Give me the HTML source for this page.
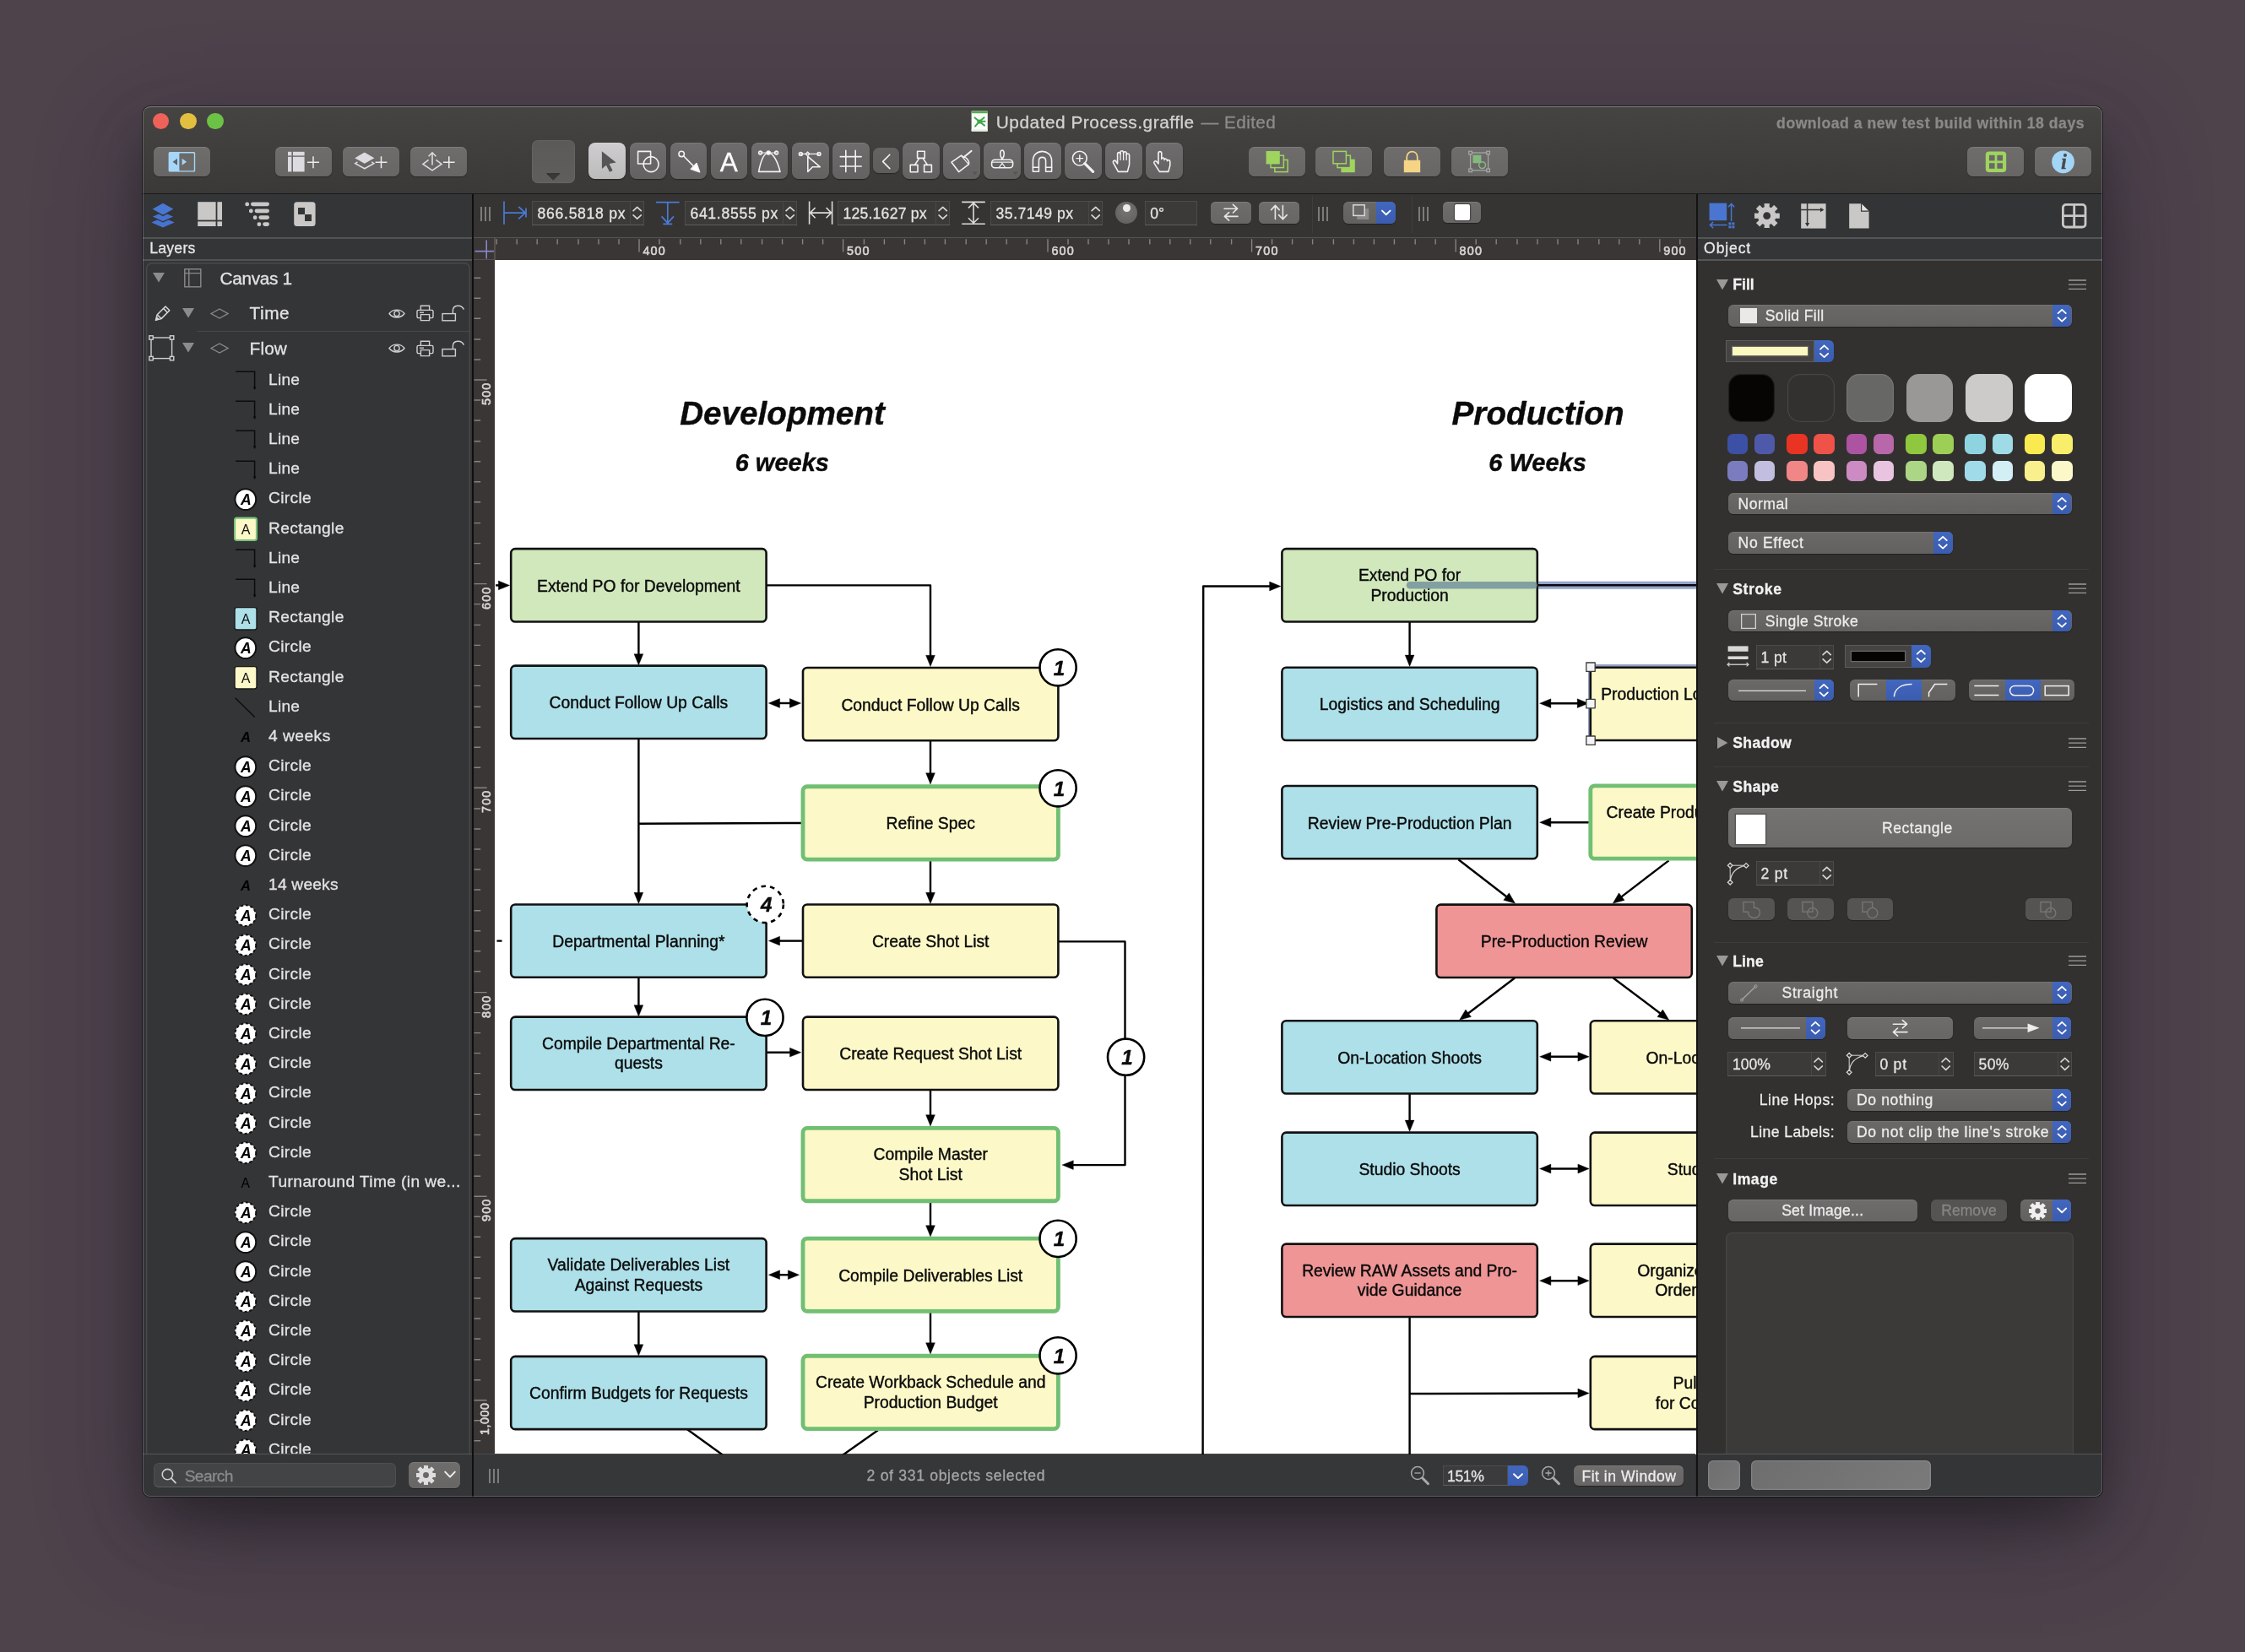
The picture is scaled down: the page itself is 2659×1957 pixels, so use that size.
<!DOCTYPE html>
<html lang="en"><head><meta charset="utf-8"><title>Updated Process.graffle</title>
<style>
html,body{margin:0;padding:0}
body{width:2659px;height:1957px;background:#4e424b;position:relative;overflow:hidden;font-family:"Liberation Sans",sans-serif;}
#shadow{position:absolute;left:169px;top:126px;width:2321px;height:1647px;border-radius:9px;box-shadow:0 30px 60px rgba(0,0,0,.27),0 45px 120px -30px rgba(0,0,0,.39),0 34px 130px 40px rgba(56,74,150,.06),0 0 0 1px rgba(20,18,20,.75);}
#win{will-change:transform;position:absolute;left:169px;top:126px;width:2321px;height:1647px;border-radius:9px;overflow:hidden;background:#323130;}
#win div,#win svg.a,#win span.t{position:absolute}
#win span.t{white-space:nowrap;display:block;-webkit-text-stroke:0.3px currentColor}
#edge{position:absolute;left:169px;top:126px;width:2321px;height:1647px;border-radius:9px;box-sizing:border-box;border:1.5px solid rgba(255,255,255,.20);border-top-color:rgba(255,255,255,.34);pointer-events:none}
.btn{border-radius:6.5px;background:linear-gradient(#6f6d6c,#686665);box-shadow:0 1px 1px rgba(0,0,0,.35),inset 0 1px 0 rgba(255,255,255,.10)}
.dd{border-radius:6px;background:linear-gradient(#6a6968,#626160);box-shadow:0 1px 1px rgba(0,0,0,.35),inset 0 1px 0 rgba(255,255,255,.08);overflow:hidden}
.fld{background:#3b3a39;box-shadow:inset 0 0 0 1px rgba(255,255,255,.09),inset 0 -1px 0 rgba(255,255,255,.10)}
</style></head>
<body>
<div id="shadow"></div>
<div id="win">
<div style="left:0px;top:0px;width:2321px;height:103.5px;background:linear-gradient(#464443,#3b3938);"></div>
<div style="left:0px;top:102.6px;width:2321px;height:1.6px;background:#1b1a1a;"></div>
<div style="left:0px;top:104px;width:391px;height:1543px;background:#343537;"></div>
<div style="left:0px;top:155px;width:391px;height:1.5px;background:#525355;"></div>
<div style="left:0px;top:181px;width:391px;height:1.5px;background:#525355;"></div>
<div style="left:390.1px;top:104px;width:2.1px;height:1543px;background:#100f0f;"></div>
<div style="left:392px;top:104px;width:1448px;height:52px;background:#353433;"></div>
<div style="left:392px;top:155px;width:1448px;height:1.5px;background:#555453;"></div>
<div style="left:392px;top:156.3px;width:1448px;height:25.7px;background:#393635;"></div>
<div style="left:392px;top:182px;width:25.4px;height:1414.5px;background:#393635;"></div>
<div style="left:417.3px;top:182px;width:1422.7px;height:1414.5px;background:#ffffff;"></div>
<div style="left:1840px;top:104px;width:481px;height:1543px;background:#323130;"></div>
<div style="left:1840px;top:104px;width:481px;height:52px;background:#333436;"></div>
<div style="left:1840px;top:155.5px;width:481px;height:26.5px;background:#343537;"></div>
<div style="left:1840px;top:155px;width:481px;height:1.5px;background:#555657;"></div>
<div style="left:1840px;top:181px;width:481px;height:1.5px;background:#555657;"></div>
<div style="left:1840px;top:104px;width:1.6px;height:1543px;background:#131212;"></div>
<div style="left:0px;top:1596.3px;width:391px;height:51px;background:#343537;"></div>
<div style="left:392px;top:1596.3px;width:1447px;height:51px;background:#363739;"></div>
<div style="left:1840px;top:1596.3px;width:481px;height:51px;background:#343537;"></div>
<div style="left:0px;top:1595.6px;width:391px;height:1.5px;background:#555657;"></div>
<div style="left:1840px;top:1595.6px;width:481px;height:1.5px;background:#555657;"></div>
<div style="left:392px;top:1595.6px;width:1447px;height:1.5px;background:#4a4a4b;"></div>
<svg class="a" style="left:418px;top:182px" width="1422" height="1414.5" viewBox="587 308 1422 1414.5" font-family="Liberation Sans, sans-serif" font-size="19.33" fill="#0b0b0b" stroke="#0b0b0b" stroke-width="0.4" stroke-linejoin="round">
<text x="926.5" y="502.6" text-anchor="middle" font-size="38.66" font-weight="700" font-style="italic">Development</text>
<text x="926.3" y="557.5" text-anchor="middle" font-size="29" font-weight="700" font-style="italic">6 weeks</text>
<text x="1821.6" y="502.6" text-anchor="middle" font-size="38.66" font-weight="700" font-style="italic">Production</text>
<text x="1821.1" y="557.5" text-anchor="middle" font-size="29" font-weight="700" font-style="italic">6 Weeks</text>
<path d="M575 693.4L595.6 693.4" fill="none" stroke="#000" stroke-width="2.42"/><path d="M603.6 693.4L590.3 698.8L590.3 688Z" fill="#000"/>
<path d="M908 693.4L1102 693.4L1102 781.6" fill="none" stroke="#000" stroke-width="2.42"/><path d="M1102 789.6L1096.6 776.3L1107.4 776.3Z" fill="#000"/>
<path d="M756.4 736L756.4 780" fill="none" stroke="#000" stroke-width="2.42"/><path d="M756.4 788L751 774.7L761.8 774.7Z" fill="#000"/>
<path d="M918.3 833L940.6 833" fill="none" stroke="#000" stroke-width="2.42"/><path d="M948.6 833L935.3 838.4L935.3 827.6Z" fill="#000"/><path d="M910.3 833L923.6 827.6L923.6 838.4Z" fill="#000"/>
<path d="M756.4 875L756.4 1062.6" fill="none" stroke="#000" stroke-width="2.42"/><path d="M756.4 1070.6L751 1057.3L761.8 1057.3Z" fill="#000"/>
<path d="M950 975L756.4 975.8" fill="none" stroke="#000" stroke-width="2.42"/>
<path d="M1102 877L1102 921" fill="none" stroke="#000" stroke-width="2.42"/><path d="M1102 929L1096.6 915.7L1107.4 915.7Z" fill="#000"/>
<path d="M1102 1019L1102 1062.6" fill="none" stroke="#000" stroke-width="2.42"/><path d="M1102 1070.6L1096.6 1057.3L1107.4 1057.3Z" fill="#000"/>
<path d="M950 1114.6L918.3 1114.6" fill="none" stroke="#000" stroke-width="2.42"/><path d="M910.3 1114.6L923.6 1109.2L923.6 1120Z" fill="#000"/>
<path d="M588.5 1114.6L606 1114.6" fill="none" stroke="#000" stroke-width="2.42" stroke-dasharray="6 10"/>
<path d="M756.4 1158L756.4 1196" fill="none" stroke="#000" stroke-width="2.42"/><path d="M756.4 1204L751 1190.7L761.8 1190.7Z" fill="#000"/>
<path d="M908 1246.7L940.8 1246.7" fill="none" stroke="#000" stroke-width="2.42"/><path d="M948.8 1246.7L935.5 1252.1L935.5 1241.3Z" fill="#000"/>
<path d="M1102 1290L1102 1326" fill="none" stroke="#000" stroke-width="2.42"/><path d="M1102 1334L1096.6 1320.7L1107.4 1320.7Z" fill="#000"/>
<path d="M1253 1115.4L1332.5 1115.4L1332.5 1380.1L1266 1380.1" fill="none" stroke="#000" stroke-width="2.42"/><path d="M1258 1380.1L1271.3 1374.7L1271.3 1385.5Z" fill="#000"/>
<path d="M1102 1424L1102 1457" fill="none" stroke="#000" stroke-width="2.42"/><path d="M1102 1465L1096.6 1451.7L1107.4 1451.7Z" fill="#000"/>
<path d="M918.3 1510.2L938.6 1510.2" fill="none" stroke="#000" stroke-width="2.42"/><path d="M946.6 1510.2L933.3 1515.6L933.3 1504.8Z" fill="#000"/><path d="M910.3 1510.2L923.6 1504.8L923.6 1515.6Z" fill="#000"/>
<path d="M1102 1555L1102 1596" fill="none" stroke="#000" stroke-width="2.42"/><path d="M1102 1604L1096.6 1590.7L1107.4 1590.7Z" fill="#000"/>
<path d="M756.4 1553L756.4 1598" fill="none" stroke="#000" stroke-width="2.42"/><path d="M756.4 1606L751 1592.7L761.8 1592.7Z" fill="#000"/>
<path d="M813.3 1692.8L869 1733" fill="none" stroke="#000" stroke-width="2.42"/>
<path d="M1039.9 1694.2L985 1733" fill="none" stroke="#000" stroke-width="2.42"/>
<path d="M1424.6 1730L1425.2 694.5L1508.9 694.5" fill="none" stroke="#000" stroke-width="2.42"/><path d="M1516.9 694.5L1503.6 699.9L1503.6 689.1Z" fill="#000"/>
<path d="M1669.6 737L1669.6 781.4" fill="none" stroke="#000" stroke-width="2.42"/><path d="M1669.6 789.4L1664.2 776.1L1675 776.1Z" fill="#000"/>
<path d="M1831.6 833.2L1873.5 833.2" fill="none" stroke="#000" stroke-width="2.42"/><path d="M1881.5 833.2L1868.2 838.6L1868.2 827.8Z" fill="#000"/><path d="M1823.6 833.2L1836.9 827.8L1836.9 838.6Z" fill="#000"/>
<path d="M1883 974.2L1831.6 974.2" fill="none" stroke="#000" stroke-width="2.42"/><path d="M1823.6 974.2L1836.9 968.8L1836.9 979.6Z" fill="#000"/>
<path d="M1727.4 1018.3L1788.27 1065.31" fill="none" stroke="#000" stroke-width="2.42"/><path d="M1794.6 1070.2L1780.77 1066.34L1787.37 1057.8Z" fill="#000"/>
<path d="M1976.6 1019.4L1916.55 1065.34" fill="none" stroke="#000" stroke-width="2.42"/><path d="M1910.2 1070.2L1917.48 1057.83L1924.04 1066.41Z" fill="#000"/>
<path d="M1794.1 1158.5L1734.97 1203.46" fill="none" stroke="#000" stroke-width="2.42"/><path d="M1728.6 1208.3L1735.92 1195.95L1742.46 1204.55Z" fill="#000"/>
<path d="M1910.7 1158.5L1970.41 1203.49" fill="none" stroke="#000" stroke-width="2.42"/><path d="M1976.8 1208.3L1962.93 1204.61L1969.43 1195.98Z" fill="#000"/>
<path d="M1831.6 1251.8L1874.2 1251.8" fill="none" stroke="#000" stroke-width="2.42"/><path d="M1882.2 1251.8L1868.9 1257.2L1868.9 1246.4Z" fill="#000"/><path d="M1823.6 1251.8L1836.9 1246.4L1836.9 1257.2Z" fill="#000"/>
<path d="M1669.6 1295L1669.6 1332.4" fill="none" stroke="#000" stroke-width="2.42"/><path d="M1669.6 1340.4L1664.2 1327.1L1675 1327.1Z" fill="#000"/>
<path d="M1831.6 1384.5L1874.2 1384.5" fill="none" stroke="#000" stroke-width="2.42"/><path d="M1882.2 1384.5L1868.9 1389.9L1868.9 1379.1Z" fill="#000"/><path d="M1823.6 1384.5L1836.9 1379.1L1836.9 1389.9Z" fill="#000"/>
<path d="M1831.6 1517.2L1874.2 1517.2" fill="none" stroke="#000" stroke-width="2.42"/><path d="M1882.2 1517.2L1868.9 1522.6L1868.9 1511.8Z" fill="#000"/><path d="M1823.6 1517.2L1836.9 1511.8L1836.9 1522.6Z" fill="#000"/>
<path d="M1669.6 1560L1669.6 1730" fill="none" stroke="#000" stroke-width="2.42"/>
<path d="M1669.6 1651L1874.2 1650.42" fill="none" stroke="#000" stroke-width="2.42"/><path d="M1882.2 1650.4L1868.92 1655.84L1868.88 1645.04Z" fill="#000"/>
<rect x="605.2" y="650.15" width="302.4" height="86.3" rx="5" fill="#d1e8bd" stroke="#111" stroke-width="2.6"/><text x="756.4" y="700.7" text-anchor="middle">Extend PO for Development</text>
<rect x="605.2" y="788.65" width="302.4" height="86.3" rx="5" fill="#aee0ea" stroke="#111" stroke-width="2.6"/><text x="756.4" y="839.2" text-anchor="middle">Conduct Follow Up Calls</text>
<rect x="605.2" y="1071.45" width="302.4" height="86.3" rx="5" fill="#aee0ea" stroke="#111" stroke-width="2.6"/><text x="756.4" y="1122" text-anchor="middle">Departmental Planning*</text>
<rect x="605.2" y="1204.65" width="302.4" height="86.3" rx="5" fill="#aee0ea" stroke="#111" stroke-width="2.6"/><text x="756.4" y="1242.6" text-anchor="middle">Compile Departmental Re-</text><text x="756.4" y="1266.3" text-anchor="middle">quests</text>
<rect x="605.2" y="1467.15" width="302.4" height="86.3" rx="5" fill="#aee0ea" stroke="#111" stroke-width="2.6"/><text x="756.4" y="1505.1" text-anchor="middle">Validate Deliverables List</text><text x="756.4" y="1528.8" text-anchor="middle">Against Requests</text>
<rect x="605.2" y="1606.85" width="302.4" height="86.3" rx="5" fill="#aee0ea" stroke="#111" stroke-width="2.6"/><text x="756.4" y="1657.4" text-anchor="middle">Confirm Budgets for Requests</text>
<rect x="951" y="790.95" width="302.4" height="86.3" rx="5" fill="#fcf8c7" stroke="#111" stroke-width="2.6"/><text x="1102.2" y="841.5" text-anchor="middle">Conduct Follow Up Calls</text>
<rect x="951" y="931.75" width="302.4" height="86.3" rx="5" fill="#fcf8c7" stroke="#70bf73" stroke-width="4.83"/><text x="1102.2" y="982.3" text-anchor="middle">Refine Spec</text>
<rect x="951" y="1071.45" width="302.4" height="86.3" rx="5" fill="#fcf8c7" stroke="#111" stroke-width="2.6"/><text x="1102.2" y="1122" text-anchor="middle">Create Shot List</text>
<rect x="951" y="1204.65" width="302.4" height="86.3" rx="5" fill="#fcf8c7" stroke="#111" stroke-width="2.6"/><text x="1102.2" y="1255.2" text-anchor="middle">Create Request Shot List</text>
<rect x="951" y="1336.45" width="302.4" height="86.3" rx="5" fill="#fcf8c7" stroke="#70bf73" stroke-width="4.83"/><text x="1102.2" y="1374.4" text-anchor="middle">Compile Master</text><text x="1102.2" y="1398.1" text-anchor="middle">Shot List</text>
<rect x="951" y="1467.05" width="302.4" height="86.3" rx="5" fill="#fcf8c7" stroke="#70bf73" stroke-width="4.83"/><text x="1102.2" y="1517.6" text-anchor="middle">Compile Deliverables List</text>
<rect x="951" y="1606.25" width="302.4" height="86.3" rx="5" fill="#fcf8c7" stroke="#70bf73" stroke-width="4.83"/><text x="1102.2" y="1644.2" text-anchor="middle">Create Workback Schedule and</text><text x="1102.2" y="1667.9" text-anchor="middle">Production Budget</text>
<rect x="1518.4" y="650.15" width="302.4" height="86.3" rx="5" fill="#d1e8bd" stroke="#111" stroke-width="2.6"/><text x="1669.6" y="688.1" text-anchor="middle">Extend PO for</text><text x="1669.6" y="711.8" text-anchor="middle">Production</text>
<rect x="1518.4" y="790.75" width="302.4" height="86.3" rx="5" fill="#aee0ea" stroke="#111" stroke-width="2.6"/><text x="1669.6" y="841.3" text-anchor="middle">Logistics and Scheduling</text>
<rect x="1518.4" y="930.95" width="302.4" height="86.3" rx="5" fill="#aee0ea" stroke="#111" stroke-width="2.6"/><text x="1669.6" y="981.5" text-anchor="middle">Review Pre-Production Plan</text>
<rect x="1701.4" y="1071.65" width="302.4" height="86.3" rx="5" fill="#f09596" stroke="#111" stroke-width="2.6"/><text x="1852.6" y="1122.2" text-anchor="middle">Pre-Production Review</text>
<rect x="1518.4" y="1209.25" width="302.4" height="86.3" rx="5" fill="#aee0ea" stroke="#111" stroke-width="2.6"/><text x="1669.6" y="1259.8" text-anchor="middle">On-Location Shoots</text>
<rect x="1518.4" y="1341.65" width="302.4" height="86.3" rx="5" fill="#aee0ea" stroke="#111" stroke-width="2.6"/><text x="1669.6" y="1392.2" text-anchor="middle">Studio Shoots</text>
<rect x="1518.4" y="1473.65" width="302.4" height="86.3" rx="5" fill="#f09596" stroke="#111" stroke-width="2.6"/><text x="1669.6" y="1511.6" text-anchor="middle">Review RAW Assets and Pro-</text><text x="1669.6" y="1535.3" text-anchor="middle">vide Guidance</text>
<path d="M2012 790.2H1884.2V877.4" fill="none" stroke="#7f92bd" stroke-width="6.5" opacity=".85"/>
<rect x="1883.8" y="790.75" width="302.4" height="86.3" rx="5" fill="#fcf8c7" stroke="#111" stroke-width="2.6"/><text x="1896.2" y="828.7" text-anchor="start">Production Logistics and Sched-</text>
<rect x="1883.8" y="930.85" width="302.4" height="86.3" rx="5" fill="#fcf8c7" stroke="#70bf73" stroke-width="4.83"/><text x="1902.5" y="968.8" text-anchor="start">Create Production Plan and Work-</text>
<rect x="1883.8" y="1209.25" width="302.4" height="86.3" rx="5" fill="#fcf8c7" stroke="#111" stroke-width="2.6"/><text x="2035" y="1259.8" text-anchor="middle">On-Location Shoots</text>
<rect x="1883.8" y="1341.65" width="302.4" height="86.3" rx="5" fill="#fcf8c7" stroke="#111" stroke-width="2.6"/><text x="2035" y="1392.2" text-anchor="middle">Studio Shoots</text>
<rect x="1883.8" y="1473.65" width="302.4" height="86.3" rx="5" fill="#fcf8c7" stroke="#111" stroke-width="2.6"/><text x="1939.2" y="1511.6" text-anchor="start">Organize Assets in</text><text x="1960.3" y="1535.3" text-anchor="start">Order of Priority</text>
<rect x="1883.8" y="1606.85" width="302.4" height="86.3" rx="5" fill="#fcf8c7" stroke="#111" stroke-width="2.6"/><text x="1981.5" y="1644.8" text-anchor="start">Pull Selects</text><text x="1960.8" y="1668.5" text-anchor="start">for Compositing</text>
<path d="M1822 693.2H2012" stroke="#8a9cc6" stroke-width="9" opacity=".9"/>
<path d="M1822 693.2H2012" stroke="#0a0a0a" stroke-width="2.6"/>
<path d="M1670 693.2H1816.5" stroke="#6f8f9b" stroke-width="8.6" stroke-linecap="round" opacity=".8"/>
<rect x="1878.8" y="785" width="10.4" height="10.4" fill="#f4f4f4" stroke="#3a3a3a" stroke-width="1.3"/>
<rect x="1878.8" y="828.4" width="10.4" height="10.4" fill="#f4f4f4" stroke="#3a3a3a" stroke-width="1.3"/>
<rect x="1878.8" y="872" width="10.4" height="10.4" fill="#f4f4f4" stroke="#3a3a3a" stroke-width="1.3"/>
<circle cx="1253.1" cy="790.8" r="21.6" fill="#fff" stroke="#000" stroke-width="2.6"/><text x="1254.6" y="799.8" text-anchor="middle" font-size="24.2" font-weight="700" font-style="italic">1</text>
<circle cx="1253.1" cy="933.8" r="21.6" fill="#fff" stroke="#000" stroke-width="2.6"/><text x="1254.6" y="942.8" text-anchor="middle" font-size="24.2" font-weight="700" font-style="italic">1</text>
<circle cx="906.3" cy="1071.4" r="21.6" fill="#fff" stroke="#000" stroke-width="2.6" stroke-dasharray="5.5 5.2"/><text x="907.8" y="1080.4" text-anchor="middle" font-size="24.2" font-weight="700" font-style="italic">4</text>
<circle cx="906" cy="1205.4" r="21.6" fill="#fff" stroke="#000" stroke-width="2.6"/><text x="907.5" y="1214.4" text-anchor="middle" font-size="24.2" font-weight="700" font-style="italic">1</text>
<circle cx="1333.6" cy="1252.2" r="21.6" fill="#fff" stroke="#000" stroke-width="2.6"/><text x="1335.1" y="1261.2" text-anchor="middle" font-size="24.2" font-weight="700" font-style="italic">1</text>
<circle cx="1253.1" cy="1467.4" r="21.6" fill="#fff" stroke="#000" stroke-width="2.6"/><text x="1254.6" y="1476.4" text-anchor="middle" font-size="24.2" font-weight="700" font-style="italic">1</text>
<circle cx="1253.1" cy="1605.8" r="21.6" fill="#fff" stroke="#000" stroke-width="2.6"/><text x="1254.6" y="1614.8" text-anchor="middle" font-size="24.2" font-weight="700" font-style="italic">1</text>
</svg>
<svg class="a" style="left:392px;top:156.3px;" width="1448" height="26" viewBox="0 0 1448 26"><path d="M27.2 1.2V7.4M51.2 1.2V7.4M75.2 1.2V7.4M99.2 1.2V7.4M124 1.2V7.4M148 1.2V7.4M172 1.2V7.4M196 1.2V16.6M220 1.2V7.4M244.8 1.2V7.4M268.8 1.2V7.4M292.8 1.2V7.4M316.8 1.2V7.4M341.6 1.2V7.4M365.6 1.2V7.4M389.6 1.2V7.4M413.6 1.2V7.4M437.6 1.2V16.6M462.4 1.2V7.4M486.4 1.2V7.4M510.4 1.2V7.4M534.4 1.2V7.4M558.4 1.2V7.4M583.2 1.2V7.4M607.2 1.2V7.4M631.2 1.2V7.4M655.2 1.2V7.4M680 1.2V16.6M704 1.2V7.4M728 1.2V7.4M752 1.2V7.4M776 1.2V7.4M800.8 1.2V7.4M824.8 1.2V7.4M848.8 1.2V7.4M872.8 1.2V7.4M897.6 1.2V7.4M921.6 1.2V16.6M945.6 1.2V7.4M969.6 1.2V7.4M993.6 1.2V7.4M1018.4 1.2V7.4M1042.4 1.2V7.4M1066.4 1.2V7.4M1090.4 1.2V7.4M1115.2 1.2V7.4M1139.2 1.2V7.4M1163.2 1.2V16.6M1187.2 1.2V7.4M1211.2 1.2V7.4M1236 1.2V7.4M1260 1.2V7.4M1284 1.2V7.4M1308 1.2V7.4M1332.8 1.2V7.4M1356.8 1.2V7.4M1380.8 1.2V7.4M1404.8 1.2V16.6M1428.8 1.2V7.4" stroke="#868380" stroke-width="1.4" fill="none"/></svg>
<span class="t" style="left:592.4px;top:164px;font-size:14.4px;line-height:14.4px;color:#d8d6d4;letter-spacing:1.2px;-webkit-text-stroke:0.6px currentColor;">400</span>
<span class="t" style="left:834px;top:164px;font-size:14.4px;line-height:14.4px;color:#d8d6d4;letter-spacing:1.2px;-webkit-text-stroke:0.6px currentColor;">500</span>
<span class="t" style="left:1076.4px;top:164px;font-size:14.4px;line-height:14.4px;color:#d8d6d4;letter-spacing:1.2px;-webkit-text-stroke:0.6px currentColor;">600</span>
<span class="t" style="left:1318px;top:164px;font-size:14.4px;line-height:14.4px;color:#d8d6d4;letter-spacing:1.2px;-webkit-text-stroke:0.6px currentColor;">700</span>
<span class="t" style="left:1559.6px;top:164px;font-size:14.4px;line-height:14.4px;color:#d8d6d4;letter-spacing:1.2px;-webkit-text-stroke:0.6px currentColor;">800</span>
<span class="t" style="left:1801.2px;top:164px;font-size:14.4px;line-height:14.4px;color:#d8d6d4;letter-spacing:1.2px;-webkit-text-stroke:0.6px currentColor;">900</span>
<svg class="a" style="left:392px;top:182px;" width="26" height="1415" viewBox="0 0 26 1415"><path d="M0.5 21.2H8.2M0.5 45.2H8.2M0.5 69.2H8.2M0.5 94H8.2M0.5 118H8.2M0.5 142H15.6M0.5 166H8.2M0.5 190H8.2M0.5 214.8H8.2M0.5 238.8H8.2M0.5 262.8H8.2M0.5 286.8H8.2M0.5 311.6H8.2M0.5 335.6H8.2M0.5 359.6H8.2M0.5 383.6H15.6M0.5 407.6H8.2M0.5 432.4H8.2M0.5 456.4H8.2M0.5 480.4H8.2M0.5 504.4H8.2M0.5 529.2H8.2M0.5 553.2H8.2M0.5 577.2H8.2M0.5 601.2H8.2M0.5 625.2H15.6M0.5 650H8.2M0.5 674H8.2M0.5 698H8.2M0.5 722H8.2M0.5 746H8.2M0.5 770.8H8.2M0.5 794.8H8.2M0.5 818.8H8.2M0.5 842.8H8.2M0.5 867.6H15.6M0.5 891.6H8.2M0.5 915.6H8.2M0.5 939.6H8.2M0.5 963.6H8.2M0.5 988.4H8.2M0.5 1012.4H8.2M0.5 1036.4H8.2M0.5 1060.4H8.2M0.5 1085.2H8.2M0.5 1109.2H15.6M0.5 1133.2H8.2M0.5 1157.2H8.2M0.5 1181.2H8.2M0.5 1206H8.2M0.5 1230H8.2M0.5 1254H8.2M0.5 1278H8.2M0.5 1302.8H8.2M0.5 1326.8H8.2M0.5 1350.8H15.6M0.5 1374.8H8.2M0.5 1398.8H8.2" stroke="#868380" stroke-width="1.4" fill="none"/></svg>
<span class="t" style="left:412.2px;top:354.1px;font-size:14.4px;line-height:14.4px;color:#d8d6d4;-webkit-text-stroke:0.6px currentColor;letter-spacing:1.16px;transform-origin:0 0;transform:rotate(-90deg) translateY(-11.7px)">500</span>
<span class="t" style="left:412.2px;top:595.7px;font-size:14.4px;line-height:14.4px;color:#d8d6d4;-webkit-text-stroke:0.6px currentColor;letter-spacing:1.16px;transform-origin:0 0;transform:rotate(-90deg) translateY(-11.7px)">600</span>
<span class="t" style="left:412.2px;top:837.3px;font-size:14.4px;line-height:14.4px;color:#d8d6d4;-webkit-text-stroke:0.6px currentColor;letter-spacing:1.16px;transform-origin:0 0;transform:rotate(-90deg) translateY(-11.7px)">700</span>
<span class="t" style="left:412.2px;top:1079.7px;font-size:14.4px;line-height:14.4px;color:#d8d6d4;-webkit-text-stroke:0.6px currentColor;letter-spacing:1.16px;transform-origin:0 0;transform:rotate(-90deg) translateY(-11.7px)">800</span>
<span class="t" style="left:412.2px;top:1321.3px;font-size:14.4px;line-height:14.4px;color:#d8d6d4;-webkit-text-stroke:0.6px currentColor;letter-spacing:1.16px;transform-origin:0 0;transform:rotate(-90deg) translateY(-11.7px)">900</span>
<span class="t" style="left:410.2px;top:1573.9px;font-size:14.4px;line-height:14.4px;color:#d8d6d4;-webkit-text-stroke:0.6px currentColor;letter-spacing:0.5px;transform-origin:0 0;transform:rotate(-90deg) translateY(-11.7px)">1,000</span>
<div style="left:392px;top:156.3px;width:25.7px;height:25.7px;background:#393635;"></div>
<svg class="a" style="left:392px;top:156.3px;" width="26" height="26" viewBox="0 0 26 26"><path d="M1.5 15.6H24.5M15.2 2.5V24.5" stroke="#8586c8" stroke-width="1.6"/></svg>
<div style="left:416.4px;top:156.3px;width:1.2px;height:25.7px;background:#54514f;"></div>
<div style="left:392px;top:180.8px;width:25.6px;height:1.2px;background:#54514f;"></div>
<svg class="a" style="left:399.6px;top:118.6px;" width="12" height="17" viewBox="0 0 12 17"><path d="M1 0V17M6 0V17M11 0V17" stroke="#a3a2a1" stroke-width="1.3"/></svg>
<svg class="a" style="left:425px;top:110px;" width="32" height="32" viewBox="0 0 32 32"><path d="M3 2.6V29.8M3 16.1H28.6M20.2 8.8L28.2 16.1L20.2 23.4M29 10.6V21.6" fill="none" stroke="#4a7ad6" stroke-width="1.7"/></svg>
<div class="fld" style="left:461.4px;top:112.2px;width:133.1px;height:28.5px;"></div>
<div style="left:577.1px;top:113.2px;width:1.2px;height:26.5px;background:rgba(255,255,255,.07);"></div>
<svg class="a" style="left:577.1px;top:112.2px;" width="17.4" height="28.5" viewBox="0 0 17.4 28.5"><path d="M4.1 11.65L8.7 7.35L13.3 11.65M4.1 16.85L8.7 21.15L13.3 16.85" fill="none" stroke="#d6d6d6" stroke-width="1.7" stroke-linecap="round" stroke-linejoin="round"/></svg>
<span class="t" style="left:467.6px;top:119px;font-size:17.6px;line-height:17.6px;color:#e4e4e4;letter-spacing:0.7px;">866.5818 px</span>
<svg class="a" style="left:606px;top:110px;" width="32" height="32" viewBox="0 0 32 32"><path d="M2 3.6H29.6M15.8 3.6V28.4M8.6 20.4L15.8 28.2L23 20.4M10.4 29.4H21.2" fill="none" stroke="#4a7ad6" stroke-width="1.7"/></svg>
<div class="fld" style="left:642.2px;top:112.2px;width:133.1px;height:28.5px;"></div>
<div style="left:757.9px;top:113.2px;width:1.2px;height:26.5px;background:rgba(255,255,255,.07);"></div>
<svg class="a" style="left:757.9px;top:112.2px;" width="17.4" height="28.5" viewBox="0 0 17.4 28.5"><path d="M4.1 11.65L8.7 7.35L13.3 11.65M4.1 16.85L8.7 21.15L13.3 16.85" fill="none" stroke="#d6d6d6" stroke-width="1.7" stroke-linecap="round" stroke-linejoin="round"/></svg>
<span class="t" style="left:648.4px;top:119px;font-size:17.6px;line-height:17.6px;color:#e4e4e4;letter-spacing:0.7px;">641.8555 px</span>
<svg class="a" style="left:786.5px;top:110px;" width="32" height="32" viewBox="0 0 32 32"><path d="M2.6 2.6V29.8M29.6 2.6V29.8M3.4 16.1H28.8M9.6 10L3.6 16.1L9.6 22.2M22.6 10L28.6 16.1L22.6 22.2" fill="none" stroke="#dcdcdc" stroke-width="1.6"/></svg>
<div class="fld" style="left:823.2px;top:112.2px;width:133.1px;height:28.5px;"></div>
<div style="left:938.9px;top:113.2px;width:1.2px;height:26.5px;background:rgba(255,255,255,.07);"></div>
<svg class="a" style="left:938.9px;top:112.2px;" width="17.4" height="28.5" viewBox="0 0 17.4 28.5"><path d="M4.1 11.65L8.7 7.35L13.3 11.65M4.1 16.85L8.7 21.15L13.3 16.85" fill="none" stroke="#d6d6d6" stroke-width="1.7" stroke-linecap="round" stroke-linejoin="round"/></svg>
<span class="t" style="left:829.4px;top:119px;font-size:17.6px;line-height:17.6px;color:#e4e4e4;letter-spacing:0.24px;">125.1627 px</span>
<svg class="a" style="left:967.5px;top:110px;" width="32" height="32" viewBox="0 0 32 32"><path d="M2.2 3.4H29.8M2.2 29.2H29.8M16 4.2V28.4M10 10.4L16 4.4L22 10.4M10 22.2L16 28.2L22 22.2" fill="none" stroke="#dcdcdc" stroke-width="1.6"/></svg>
<div class="fld" style="left:1004.4px;top:112.2px;width:133.1px;height:28.5px;"></div>
<div style="left:1120.1px;top:113.2px;width:1.2px;height:26.5px;background:rgba(255,255,255,.07);"></div>
<svg class="a" style="left:1120.1px;top:112.2px;" width="17.4" height="28.5" viewBox="0 0 17.4 28.5"><path d="M4.1 11.65L8.7 7.35L13.3 11.65M4.1 16.85L8.7 21.15L13.3 16.85" fill="none" stroke="#d6d6d6" stroke-width="1.7" stroke-linecap="round" stroke-linejoin="round"/></svg>
<span class="t" style="left:1010.6px;top:119px;font-size:17.6px;line-height:17.6px;color:#e4e4e4;letter-spacing:0.49px;">35.7149 px</span>
<div style="left:1152.3px;top:113.2px;width:26.2px;height:26.2px;background:radial-gradient(circle at 50% 40%,#777574,#5f5d5c);border-radius:50%;"></div>
<div style="left:1160.9px;top:115.8px;width:8.8px;height:8.8px;background:#ecebea;border-radius:50%;"></div>
<div class="fld" style="left:1187px;top:112.2px;width:62.2px;height:28.5px;"></div>
<span class="t" style="left:1193.2px;top:119px;font-size:17.6px;line-height:17.6px;color:#e4e4e4;">0°</span>
<div class="btn" style="left:1264.6px;top:113.4px;width:48.1px;height:25.4px;border-radius:5.5px;"></div>
<svg class="a" style="left:1264.6px;top:113.4px;" width="48.1" height="25.4" viewBox="0 0 48.1 25.4"><path d="M16 8.2H31.4M26.4 3.4L31.6 8.2L26.4 13M32 17.4H16.6M21.6 12.6L16.4 17.4L21.6 22.2" fill="none" stroke="#e6e6e6" stroke-width="1.6" stroke-linecap="round" stroke-linejoin="round"/></svg>
<div class="btn" style="left:1322.4px;top:113.4px;width:47.6px;height:25.4px;border-radius:5.5px;"></div>
<svg class="a" style="left:1322.4px;top:113.4px;" width="47.6" height="25.4" viewBox="0 0 47.6 25.4"><path d="M19.4 20.6V4.6M14.6 9.6L19.4 4.4L24.2 9.6M28.4 4.6V20.6M23.6 15.6L28.4 20.8L33.2 15.6" fill="none" stroke="#e6e6e6" stroke-width="1.6" stroke-linecap="round" stroke-linejoin="round"/></svg>
<div style="left:1384.8px;top:106px;width:1.2px;height:44px;background:#3f3e3d;"></div>
<svg class="a" style="left:1392.3px;top:118.6px;" width="12" height="17" viewBox="0 0 12 17"><path d="M1 0V17M6 0V17M11 0V17" stroke="#a3a2a1" stroke-width="1.3"/></svg>
<div class="dd" style="left:1421.8px;top:113.4px;width:62px;height:25.4px;"></div>
<div style="left:1461.3px;top:113.4px;width:22.5px;height:25.4px;background:linear-gradient(#4267bf,#3a5cb0);border-radius:0 6px 6px 0;"></div>
<svg class="a" style="left:1421.8px;top:113.4px;" width="62" height="25.4" viewBox="0 0 62 25.4"><rect x="16.2" y="8" width="14" height="13" fill="#8a8988"/><rect x="11.8" y="3.8" width="13.4" height="12.6" fill="#6a6968" stroke="#d8d8d8" stroke-width="1.5"/><path d="M46 10.6L50.8 15.2L55.6 10.6" fill="none" stroke="#fff" stroke-width="1.9" stroke-linecap="round" stroke-linejoin="round"/></svg>
<div style="left:1502.8px;top:106px;width:1.2px;height:44px;background:#3f3e3d;"></div>
<svg class="a" style="left:1510.5px;top:118.6px;" width="12" height="17" viewBox="0 0 12 17"><path d="M1 0V17M6 0V17M11 0V17" stroke="#a3a2a1" stroke-width="1.3"/></svg>
<div class="btn" style="left:1540px;top:112.8px;width:44.7px;height:25.5px;border-radius:5.5px;"></div>
<div style="left:1553.6px;top:116.2px;width:18.6px;height:18.6px;background:#fff;border-radius:2px;box-shadow:0 0 0 1.2px #4a4948;"></div>
<div style="left:12.1px;top:7.8px;width:19.4px;height:19.4px;background:#ee6259;border-radius:50%;"></div>
<div style="left:44.2px;top:7.8px;width:19.4px;height:19.4px;background:#e3bf3f;border-radius:50%;"></div>
<div style="left:76.2px;top:7.8px;width:19.4px;height:19.4px;background:#6cc245;border-radius:50%;"></div>
<svg class="a" style="left:980.6px;top:4.6px;" width="20.6" height="25.4" viewBox="0 0 20.6 25.4"><rect x="0.6" y="0.6" width="19.2" height="24" rx="1" fill="#fbfbfb"/><rect x="0.6" y="0.6" width="19.2" height="2.6" fill="#4fae4d"/><rect x="0.6" y="22.4" width="19.2" height="2.2" fill="#e4f0e2"/><g stroke="#3fa94a" stroke-width="2" stroke-linecap="round"><path d="M10 13L4.6 8.4M10 13L15.6 8.2M10 13L5 18.6M10 13L16 17.6M10 13L16.6 12.8"/></g><circle cx="10" cy="13" r="2.6" fill="#3fa94a"/></svg>
<span class="t" style="left:1010.8px;top:9px;font-size:20.8px;line-height:20.8px;color:#d3d2d1;letter-spacing:0.53px;">Updated Process.graffle</span>
<span class="t" style="left:1253.6px;top:9px;font-size:20.8px;line-height:20.8px;color:#8c8b8a;letter-spacing:0.38px;">— Edited</span>
<span class="t" style="left:1935.12px;top:12px;font-size:17.6px;line-height:17.6px;color:#8a8988;font-weight:700;letter-spacing:0.52px;">download a new test build within 18 days</span>
<div class="btn" style="left:12.6px;top:47.9px;width:67.2px;height:35px;"></div>
<svg class="a" style="left:12.6px;top:47.9px;" width="67.2" height="35" viewBox="0 0 67.2 35"><rect x="17.6" y="6" width="31.6" height="23.6" rx="1.5" fill="#a6d6f8"/><rect x="30.4" y="7.4" width="17.4" height="20.8" rx="0.6" fill="#6c6a69"/><path d="M28 13.8V21.8L22.6 17.8Z" fill="#5a6570"/><path d="M33.6 13.8V21.8L39 17.8Z" fill="#a6d6f8"/></svg>
<div class="btn" style="left:156.5px;top:47.9px;width:67.2px;height:35px;"></div>
<svg class="a" style="left:156.5px;top:47.9px;" width="67.2" height="35" viewBox="0 0 67.2 35"><g fill="#dcdbe0"><rect x="15" y="5.8" width="4.4" height="4.6"/><rect x="21" y="5.8" width="13.6" height="4.6"/><rect x="15" y="11.8" width="4.4" height="17.6"/><rect x="21" y="11.8" width="13.6" height="17.6"/></g><path d="M38 18.2H52M45 11.2V25.2" stroke="#ececec" stroke-width="1.5" fill="none"/></svg>
<div class="btn" style="left:236.7px;top:47.9px;width:67.2px;height:35px;"></div>
<svg class="a" style="left:236.7px;top:47.9px;" width="67.2" height="35" viewBox="0 0 67.2 35"><path d="M25.8 6.6L37.4 13.2L25.8 19.8L14.2 13.2Z" fill="#dcdbe0"/><path d="M17.4 17.8L14.8 19.6L25.8 25.8L36.8 19.6L34.2 17.8" fill="none" stroke="#dcdbe0" stroke-width="1.6"/><path d="M38.6 18.2H52.4M45.5 11.2V25.2" stroke="#ececec" stroke-width="1.5" fill="none"/></svg>
<div class="btn" style="left:316.9px;top:47.9px;width:67.2px;height:35px;"></div>
<svg class="a" style="left:316.9px;top:47.9px;" width="67.2" height="35" viewBox="0 0 67.2 35"><g fill="none" stroke="#dcdbe0" stroke-width="1.6"><path d="M21.6 15.4L15 20.4L26 27.8L37 20.4L30.4 15.4"/><path d="M26 21.4V7M21.6 11.2L26 6.8L30.4 11.2"/></g><path d="M39 18.2H52.6M45.8 11.2V25.2" stroke="#ececec" stroke-width="1.5" fill="none"/></svg>
<div style="left:461px;top:40px;width:51.1px;height:50.8px;background:linear-gradient(#5b5a59,#5f5e5d);border-radius:7px;box-shadow:inset 0 0 0 1px rgba(255,255,255,.05);"></div>
<svg class="a" style="left:461px;top:40px;" width="51.1" height="50.8" viewBox="0 0 51.1 50.8"><path d="M17.6 39.6H33L25.3 47Z" fill="#3a3939" stroke="#333" stroke-width="1"/></svg>
<div style="left:528.4px;top:43.1px;width:43.8px;height:43px;background:linear-gradient(#cfcdcf,#bcbbbc);border-radius:8px;box-shadow:0 1px 1.5px rgba(0,0,0,.4),inset 0 1px 0 rgba(255,255,255,.10);"></div>
<svg class="a" style="left:528.4px;top:43.1px;" width="43.8" height="43" viewBox="0 0 43.8 43"><g fill="none" stroke="#f2f2f2" stroke-width="1.6" stroke-linejoin="round" stroke-linecap="round"><path d="M15.9 10.3V31L21 26.7L25 34.7L28.6 33.1L24.6 25L32.7 23.6Z" fill="#565556" stroke="none"/></g></svg>
<div style="left:576.6px;top:43.1px;width:43.8px;height:43px;background:linear-gradient(#6e6c6c,#636261);border-radius:8px;box-shadow:0 1px 1.5px rgba(0,0,0,.4),inset 0 1px 0 rgba(255,255,255,.10);"></div>
<svg class="a" style="left:576.6px;top:43.1px;" width="43.8" height="43" viewBox="0 0 43.8 43"><g fill="none" stroke="#f2f2f2" stroke-width="1.6" stroke-linejoin="round" stroke-linecap="round"><rect x="9.6" y="10.4" width="15" height="14.6"/><circle cx="25.1" cy="25.6" r="9"/></g></svg>
<div style="left:624.5px;top:43.1px;width:43.8px;height:43px;background:linear-gradient(#6e6c6c,#636261);border-radius:8px;box-shadow:0 1px 1.5px rgba(0,0,0,.4),inset 0 1px 0 rgba(255,255,255,.10);"></div>
<svg class="a" style="left:624.5px;top:43.1px;" width="43.8" height="43" viewBox="0 0 43.8 43"><g fill="none" stroke="#f2f2f2" stroke-width="1.6" stroke-linejoin="round" stroke-linecap="round"><circle cx="13.2" cy="13.4" r="3.2"/><path d="M15.6 15.8L28 28.4"/><path d="M34.6 34.8L24.4 31.2L31 24.6Z" fill="#fff"/></g></svg>
<div style="left:672.5px;top:43.1px;width:43.8px;height:43px;background:linear-gradient(#6e6c6c,#636261);border-radius:8px;box-shadow:0 1px 1.5px rgba(0,0,0,.4),inset 0 1px 0 rgba(255,255,255,.10);"></div>
<svg class="a" style="left:672.5px;top:43.1px;" width="43.8" height="43" viewBox="0 0 43.8 43"><g fill="none" stroke="#f2f2f2" stroke-width="1.6" stroke-linejoin="round" stroke-linecap="round"></g></svg>
<span class="t" style="left:683.86px;top:51px;font-size:31.6px;line-height:31.6px;color:#fff;">A</span>
<div style="left:720.7px;top:43.1px;width:43.8px;height:43px;background:linear-gradient(#6e6c6c,#636261);border-radius:8px;box-shadow:0 1px 1.5px rgba(0,0,0,.4),inset 0 1px 0 rgba(255,255,255,.10);"></div>
<svg class="a" style="left:720.7px;top:43.1px;" width="43.8" height="43" viewBox="0 0 43.8 43"><g fill="none" stroke="#f2f2f2" stroke-width="1.6" stroke-linejoin="round" stroke-linecap="round"><path d="M8.6 34.4C11 22 15 12 20.2 12C25.6 12 31 22 34 34.4Z"/><path d="M10.6 12H29.4" stroke-width="1.2"/><circle cx="10.6" cy="12" r="1.9"/><circle cx="29.6" cy="12" r="1.9"/><circle cx="20.2" cy="12" r="2" fill="#fff"/></g></svg>
<div style="left:768.8px;top:43.1px;width:43.8px;height:43px;background:linear-gradient(#6e6c6c,#636261);border-radius:8px;box-shadow:0 1px 1.5px rgba(0,0,0,.4),inset 0 1px 0 rgba(255,255,255,.10);"></div>
<svg class="a" style="left:768.8px;top:43.1px;" width="43.8" height="43" viewBox="0 0 43.8 43"><g fill="none" stroke="#f2f2f2" stroke-width="1.6" stroke-linejoin="round" stroke-linecap="round"><path d="M10 13.4H32" stroke-width="1.2"/><circle cx="10.4" cy="13.4" r="1.9"/><circle cx="32" cy="13.4" r="1.9"/><path d="M18.6 11L21 13.4L18.6 15.8L16.2 13.4Z" stroke-width="1.2"/><path d="M18.8 16.4V34.4L24.4 28.8H33.4Z"/></g></svg>
<div style="left:816.8px;top:43.1px;width:43.8px;height:43px;background:linear-gradient(#6e6c6c,#636261);border-radius:8px;box-shadow:0 1px 1.5px rgba(0,0,0,.4),inset 0 1px 0 rgba(255,255,255,.10);"></div>
<svg class="a" style="left:816.8px;top:43.1px;" width="43.8" height="43" viewBox="0 0 43.8 43"><g fill="none" stroke="#f2f2f2" stroke-width="1.6" stroke-linejoin="round" stroke-linecap="round"><path d="M15.8 9.4V34.6M27.2 9.4V34.6M9.2 16.6H34.2M9.2 28H34.2"/></g></svg>
<div style="left:864.7px;top:49.4px;width:31.4px;height:30px;background:linear-gradient(#646362,#5e5d5c);border-radius:7px;box-shadow:0 1px 1.5px rgba(0,0,0,.4);"></div>
<svg class="a" style="left:864.7px;top:49.4px;" width="31.4" height="30" viewBox="0 0 31.4 30"><g fill="none" stroke="#f2f2f2" stroke-width="1.6" stroke-linejoin="round" stroke-linecap="round"><path d="M19.8 8.2L11.6 16.4L19.8 24.6"/></g></svg>
<div style="left:900.2px;top:43.1px;width:43.8px;height:43px;background:linear-gradient(#6e6c6c,#636261);border-radius:8px;box-shadow:0 1px 1.5px rgba(0,0,0,.4),inset 0 1px 0 rgba(255,255,255,.10);"></div>
<svg class="a" style="left:900.2px;top:43.1px;" width="43.8" height="43" viewBox="0 0 43.8 43"><g fill="none" stroke="#f2f2f2" stroke-width="1.6" stroke-linejoin="round" stroke-linecap="round"><rect x="17.6" y="10.2" width="8.6" height="8.2"/><rect x="9.2" y="26.4" width="8.8" height="8.4"/><rect x="25.6" y="26.4" width="8.8" height="8.4"/><path d="M19.6 18.6L14.6 26.2M24.2 18.6L29.4 26.2"/></g></svg>
<div style="left:948.1px;top:43.1px;width:43.8px;height:43px;background:linear-gradient(#6e6c6c,#636261);border-radius:8px;box-shadow:0 1px 1.5px rgba(0,0,0,.4),inset 0 1px 0 rgba(255,255,255,.10);"></div>
<svg class="a" style="left:948.1px;top:43.1px;" width="43.8" height="43" viewBox="0 0 43.8 43"><g fill="none" stroke="#f2f2f2" stroke-width="1.6" stroke-linejoin="round" stroke-linecap="round"><path d="M10 23.2L18.6 34.6L30.4 25.6C31.4 22 28 17 24.4 17.2L21.6 15.2Z"/><path d="M24.8 17L33.6 9.8" stroke-width="2"/><path d="M21.4 15.4L30.2 25.6" stroke-width="1.2"/><path d="M34.6 34.4H40.6L37.6 38.2Z" fill="#555" stroke="none"/></g></svg>
<div style="left:996.1px;top:43.1px;width:43.8px;height:43px;background:linear-gradient(#6e6c6c,#636261);border-radius:8px;box-shadow:0 1px 1.5px rgba(0,0,0,.4),inset 0 1px 0 rgba(255,255,255,.10);"></div>
<svg class="a" style="left:996.1px;top:43.1px;" width="43.8" height="43" viewBox="0 0 43.8 43"><g fill="none" stroke="#f2f2f2" stroke-width="1.6" stroke-linejoin="round" stroke-linecap="round"><path d="M22 19.6C18.4 15 19.6 9 22 9C24.4 9 25.6 15 22 19.6Z"/><rect x="9.6" y="20.2" width="25" height="9.6" rx="3.6"/><path d="M9.8 23.2H34.4M18.4 29.4L22 24.4L25.6 29.4" stroke-width="1.2"/><path d="M34.6 34.4H40.6L37.6 38.2Z" fill="#555" stroke="none"/></g></svg>
<div style="left:1044.2px;top:43.1px;width:43.8px;height:43px;background:linear-gradient(#6e6c6c,#636261);border-radius:8px;box-shadow:0 1px 1.5px rgba(0,0,0,.4),inset 0 1px 0 rgba(255,255,255,.10);"></div>
<svg class="a" style="left:1044.2px;top:43.1px;" width="43.8" height="43" viewBox="0 0 43.8 43"><g fill="none" stroke="#f2f2f2" stroke-width="1.6" stroke-linejoin="round" stroke-linecap="round"><path d="M10.4 34.2V21.6C10.4 6.6 32.6 6.6 32.6 21.6V34.2H25.6V21.6C25.6 16 17.4 16 17.4 21.6V34.2Z"/><path d="M10.4 29.2H17.4M25.6 29.2H32.6"/></g></svg>
<div style="left:1092.3px;top:43.1px;width:43.8px;height:43px;background:linear-gradient(#6e6c6c,#636261);border-radius:8px;box-shadow:0 1px 1.5px rgba(0,0,0,.4),inset 0 1px 0 rgba(255,255,255,.10);"></div>
<svg class="a" style="left:1092.3px;top:43.1px;" width="43.8" height="43" viewBox="0 0 43.8 43"><g fill="none" stroke="#f2f2f2" stroke-width="1.6" stroke-linejoin="round" stroke-linecap="round"><circle cx="17.8" cy="18.6" r="8.4"/><path d="M14 18.6H21.6M17.8 14.8V22.4" stroke-width="1.4"/><path d="M23.8 24.6L33.6 34.4" stroke-width="3.2"/></g></svg>
<div style="left:1140.4px;top:43.1px;width:43.8px;height:43px;background:linear-gradient(#6e6c6c,#636261);border-radius:8px;box-shadow:0 1px 1.5px rgba(0,0,0,.4),inset 0 1px 0 rgba(255,255,255,.10);"></div>
<svg class="a" style="left:1140.4px;top:43.1px;" width="43.8" height="43" viewBox="0 0 43.8 43"><g fill="none" stroke="#f2f2f2" stroke-width="1.6" stroke-linejoin="round" stroke-linecap="round"><path d="M15.4 34.4L9.6 23.8C8.6 21.6 11.4 20.2 12.8 22.2L14.6 24.8V13.4C14.6 11 18 11 18 13.4V11.6C18 9.2 21.6 9.2 21.6 11.6V12.6C21.6 10.2 25.2 10.2 25.2 12.6V14.6C25.2 12.4 28.6 12.4 28.6 14.8V26L26.4 34.4Z"/><path d="M18 13V20.4M21.6 12.4V20.4M25.2 14V20.4" stroke-width="1.3"/></g></svg>
<div style="left:1188.3px;top:43.1px;width:43.8px;height:43px;background:linear-gradient(#6e6c6c,#636261);border-radius:8px;box-shadow:0 1px 1.5px rgba(0,0,0,.4),inset 0 1px 0 rgba(255,255,255,.10);"></div>
<svg class="a" style="left:1188.3px;top:43.1px;" width="43.8" height="43" viewBox="0 0 43.8 43"><g fill="none" stroke="#f2f2f2" stroke-width="1.6" stroke-linejoin="round" stroke-linecap="round"><path d="M16.4 34.4L10 24.4C9 22.4 11.6 20.8 13 22.6L15 25V12.6C15 10 18.8 10 18.8 12.6V19.4C18.8 17.6 22 17.6 22 19.6V20.4C22 18.6 25.4 18.8 25.4 20.8V21.8C25.4 20 28.8 20.2 28.8 22.4V27L26.8 34.4Z"/></g></svg>
<div class="btn" style="left:1309.5px;top:47.9px;width:67.1px;height:35px;"></div>
<svg class="a" style="left:1309.5px;top:47.9px;" width="67.1" height="35" viewBox="0 0 67.1 35"><g fill="none" stroke="#9fd55e" stroke-width="1.5"><rect x="30.8" y="15.4" width="15.4" height="14.2"/><rect x="26" y="10.2" width="15.4" height="14.4" fill="#6b6968"/></g><rect x="20.6" y="5" width="16.2" height="15.4" fill="#9fd55e"/></svg>
<div class="btn" style="left:1389.4px;top:47.9px;width:67.1px;height:35px;"></div>
<svg class="a" style="left:1389.4px;top:47.9px;" width="67.1" height="35" viewBox="0 0 67.1 35"><rect x="30.4" y="14.6" width="16.4" height="15.6" fill="#9fd55e"/><g fill="#6b6968" stroke="#9fd55e" stroke-width="1.5"><rect x="26" y="10.2" width="15.4" height="14.4"/><rect x="21" y="5.4" width="15.4" height="14.4"/></g></svg>
<div class="btn" style="left:1469.7px;top:47.9px;width:67.1px;height:35px;"></div>
<svg class="a" style="left:1469.7px;top:47.9px;" width="67.1" height="35" viewBox="0 0 67.1 35"><path d="M27.2 16.4V12.4C27.2 3.4 39.8 3.4 39.8 12.4V16.4" fill="none" stroke="#f5d585" stroke-width="1.8"/><rect x="23.8" y="15.8" width="19.4" height="14.4" fill="#f5d585"/></svg>
<div class="btn" style="left:1549.7px;top:47.9px;width:67.1px;height:35px;"></div>
<svg class="a" style="left:1549.7px;top:47.9px;" width="67.1" height="35" viewBox="0 0 67.1 35"><g fill="none" stroke="#a6a5a8" stroke-width="1.3"><rect x="22.6" y="7" width="21" height="20.8"/><rect x="20.8" y="5.2" width="3.6" height="3.6" fill="#6b6968"/><rect x="41.8" y="5.2" width="3.6" height="3.6" fill="#6b6968"/><rect x="20.8" y="26" width="3.6" height="3.6" fill="#6b6968"/><rect x="41.8" y="26" width="3.6" height="3.6" fill="#6b6968"/></g><rect x="25.4" y="9.6" width="10" height="9.6" fill="#86b77e"/><circle cx="36.6" cy="21.6" r="3.9" fill="none" stroke="#86b77e" stroke-width="1.5"/></svg>
<div class="btn" style="left:2161.3px;top:47.7px;width:67.2px;height:35.2px;"></div>
<svg class="a" style="left:2161.3px;top:47.7px;" width="67.2" height="35.2" viewBox="0 0 67.2 35.2"><rect x="21.8" y="5.6" width="24.4" height="24.4" rx="4" fill="#9fd55e"/><g fill="#6b6968"><rect x="26" y="9.8" width="6.6" height="6.6"/><rect x="35.4" y="9.8" width="6.6" height="6.6"/><rect x="26" y="19.2" width="6.6" height="6.6"/><rect x="35.4" y="19.2" width="6.6" height="6.6"/></g></svg>
<div class="btn" style="left:2241.2px;top:47.7px;width:67.2px;height:35.2px;"></div>
<svg class="a" style="left:2241.2px;top:47.7px;" width="67.2" height="35.2" viewBox="0 0 67.2 35.2"><circle cx="33.6" cy="17.8" r="13.4" fill="#a3d5f7"/></svg>
<span class="t" style="left:2271.93px;top:53px;font-size:25px;line-height:25px;color:#4b4a4a;font-weight:700;font-style:italic;font-family:'Liberation Serif',serif;">i</span>
<svg class="a" style="left:9px;top:112.6px;" width="30" height="31" viewBox="0 0 30 31"><path d="M15 18.6L1.2 24.4L15 30.4L28.8 24.4Z" fill="#4673cf"/><path d="M15 11.6L1.2 17.6L15 23.8L28.8 17.6Z" fill="#4673cf" stroke="#343537" stroke-width="1.4"/><path d="M15 1L1.2 8.6L15 16.4L28.8 8.6Z" fill="#4a77d2" stroke="#343537" stroke-width="1.4"/></svg>
<svg class="a" style="left:65px;top:113.2px;" width="30" height="30" viewBox="0 0 30 30"><g fill="#c9c8c6"><rect x="0.2" y="0.2" width="21.4" height="21.4"/><rect x="23.4" y="0.2" width="5.6" height="21.4"/><rect x="0.2" y="23.4" width="21.4" height="5.6"/><rect x="23.4" y="23.4" width="5.6" height="5.6"/></g></svg>
<svg class="a" style="left:121px;top:113.2px;" width="30" height="30" viewBox="0 0 30 30"><g fill="#c9c8c6"><rect x="0.4" y="0.4" width="4.6" height="4.8" rx="2"/><rect x="7" y="0.4" width="22" height="4.8" rx="2.4"/><rect x="5" y="8.4" width="4.6" height="4.8" rx="2"/><rect x="11.6" y="8.4" width="17.4" height="4.8" rx="2.4"/><rect x="9.8" y="16.2" width="4.6" height="4.8" rx="2"/><rect x="16.4" y="16.2" width="12.6" height="4.8" rx="2.4"/><rect x="14.6" y="24.2" width="4.6" height="4.8" rx="2"/><rect x="21.2" y="24.2" width="7.8" height="4.8" rx="2.4"/></g></svg>
<svg class="a" style="left:179px;top:113.4px;" width="26" height="29.4" viewBox="0 0 26 29.4"><rect x="0.2" y="0.2" width="25.4" height="28.8" rx="3.6" fill="#c9c8c6"/><rect x="5" y="7" width="8" height="8" fill="#343537"/><rect x="13" y="15" width="8" height="8" fill="#343537"/></svg>
<span class="t" style="left:8.2px;top:160px;font-size:17.6px;line-height:17.6px;color:#e6e6e6;letter-spacing:0.27px;">Layers</span>
<svg class="a" style="left:12px;top:197px;" width="14" height="11.6" viewBox="0 0 14 11.6"><path d="M0 0H14L7.0 11.6Z" fill="#8c8c8c"/></svg>
<svg class="a" style="left:48.6px;top:192px;" width="21" height="23" viewBox="0 0 21 23"><g fill="none" stroke="#8a8a8a" stroke-width="1.4"><rect x="0.8" y="0.8" width="19" height="21"/><path d="M0.8 5.6H19.8M5.8 0.8V21.8"/></g></svg>
<span class="t" style="left:91.5px;top:194px;font-size:20.8px;line-height:20.8px;color:#e3e3e3;letter-spacing:-0.31px;">Canvas 1</span>
<svg class="a" style="left:13.6px;top:235.4px;" width="20" height="20" viewBox="0 0 20 20"><g fill="none" stroke="#d8d8d8" stroke-width="1.5" stroke-linejoin="round"><path d="M1.4 18.4L3.2 11.8L13 2L17.8 6.8L8 16.6Z"/><path d="M10.6 4.4L15.4 9.2M3.2 11.8L8 16.6"/></g><path d="M1.2 18.6L2.6 14L5.8 17.2Z" fill="#d8d8d8"/></svg>
<svg class="a" style="left:47.2px;top:238.6px;" width="14" height="11.6" viewBox="0 0 14 11.6"><path d="M0 0H14L7.0 11.6Z" fill="#8c8c8c"/></svg>
<svg class="a" style="left:80px;top:238.6px;" width="22" height="13" viewBox="0 0 22 13"><path d="M1 6.5L11 1L21 6.5L11 12Z" fill="none" stroke="#8a8a8a" stroke-width="1.4"/></svg>
<span class="t" style="left:126.6px;top:235px;font-size:20.8px;line-height:20.8px;color:#e3e3e3;letter-spacing:0.54px;">Time</span>
<svg class="a" style="left:291px;top:238.6px;" width="20" height="13" viewBox="0 0 20 13"><path d="M1 6.5C5 0.6 15 0.6 19 6.5C15 12.4 5 12.4 1 6.5Z" fill="none" stroke="#cfcfcf" stroke-width="1.4"/><circle cx="10" cy="6.5" r="3.1" fill="none" stroke="#cfcfcf" stroke-width="1.4"/></svg>
<svg class="a" style="left:324px;top:235.2px;" width="21" height="20" viewBox="0 0 21 20"><g fill="none" stroke="#cfcfcf" stroke-width="1.4"><path d="M5.4 6.4V1.2H15.6V6.4"/><rect x="1" y="6.4" width="19" height="9.2" rx="1.5"/><path d="M5.4 11.6H15.6V18.6H5.4Z" fill="#343537"/><path d="M4 9.2H9"/></g></svg>
<svg class="a" style="left:354.4px;top:235.2px;" width="28" height="20" viewBox="0 0 28 20"><g fill="none" stroke="#cfcfcf" stroke-width="1.4"><rect x="1" y="10.6" width="15.4" height="8.2"/><path d="M13.4 10.4V7C13.4 -0.4 23.8 -0.4 26.4 5.6"/></g></svg>
<div style="left:64px;top:266px;width:323px;height:1.2px;background:#47484a;"></div>
<svg class="a" style="left:6.6px;top:271.2px;" width="32" height="32" viewBox="0 0 32 32"><g fill="none" stroke="#d0d0d0" stroke-width="1.4"><rect x="3" y="3" width="24.6" height="24.6"/><rect x="0.8" y="0.8" width="4.4" height="4.4" fill="#343537"/><rect x="25.4" y="0.8" width="4.4" height="4.4" fill="#343537"/><rect x="0.8" y="25.4" width="4.4" height="4.4" fill="#343537"/><rect x="25.4" y="25.4" width="4.4" height="4.4" fill="#343537"/></g></svg>
<svg class="a" style="left:47.2px;top:280.2px;" width="14" height="11.6" viewBox="0 0 14 11.6"><path d="M0 0H14L7.0 11.6Z" fill="#8c8c8c"/></svg>
<svg class="a" style="left:80px;top:280.2px;" width="22" height="13" viewBox="0 0 22 13"><path d="M1 6.5L11 1L21 6.5L11 12Z" fill="none" stroke="#8a8a8a" stroke-width="1.4"/></svg>
<span class="t" style="left:126.6px;top:277px;font-size:20.8px;line-height:20.8px;color:#e3e3e3;letter-spacing:0.12px;">Flow</span>
<svg class="a" style="left:291px;top:280.2px;" width="20" height="13" viewBox="0 0 20 13"><path d="M1 6.5C5 0.6 15 0.6 19 6.5C15 12.4 5 12.4 1 6.5Z" fill="none" stroke="#cfcfcf" stroke-width="1.4"/><circle cx="10" cy="6.5" r="3.1" fill="none" stroke="#cfcfcf" stroke-width="1.4"/></svg>
<svg class="a" style="left:324px;top:276.8px;" width="21" height="20" viewBox="0 0 21 20"><g fill="none" stroke="#cfcfcf" stroke-width="1.4"><path d="M5.4 6.4V1.2H15.6V6.4"/><rect x="1" y="6.4" width="19" height="9.2" rx="1.5"/><path d="M5.4 11.6H15.6V18.6H5.4Z" fill="#343537"/><path d="M4 9.2H9"/></g></svg>
<svg class="a" style="left:354.4px;top:276.8px;" width="28" height="20" viewBox="0 0 28 20"><g fill="none" stroke="#cfcfcf" stroke-width="1.4"><rect x="1" y="10.6" width="15.4" height="8.2"/><path d="M13.4 10.4V7C13.4 -0.4 23.8 -0.4 26.4 5.6"/></g></svg>
<div style="left:0;top:0;width:391px;height:1596.3px;overflow:hidden"><div style="left:4.4px;top:184.6px;width:383.6px;height:1440px;border-radius:7px;box-shadow:inset 0 0 0 1.4px rgba(255,255,255,.10);"></div>
<svg class="a" style="left:107.6px;top:308.9px;font-family:'Liberation Sans',sans-serif;" width="28" height="31" viewBox="0 0 28 31"><path d="M2.2 5.2H24.6V25.8" fill="none" stroke="#0c0c0c" stroke-width="1.5"/><path d="M22.8 23.2H26.4L24.6 27Z" fill="#0c0c0c"/></svg>
<span class="t" style="left:149.1px;top:314px;font-size:19.2px;line-height:19.2px;color:#e3e3e3;letter-spacing:0.18px;">Line</span>
<svg class="a" style="left:107.6px;top:344.1px;font-family:'Liberation Sans',sans-serif;" width="28" height="31" viewBox="0 0 28 31"><path d="M2.2 5.2H24.6V25.8" fill="none" stroke="#0c0c0c" stroke-width="1.5"/><path d="M22.8 23.2H26.4L24.6 27Z" fill="#0c0c0c"/></svg>
<span class="t" style="left:149.1px;top:349px;font-size:19.2px;line-height:19.2px;color:#e3e3e3;letter-spacing:0.18px;">Line</span>
<svg class="a" style="left:107.6px;top:379.3px;font-family:'Liberation Sans',sans-serif;" width="28" height="31" viewBox="0 0 28 31"><path d="M2.2 5.2H24.6V25.8" fill="none" stroke="#0c0c0c" stroke-width="1.5"/><path d="M22.8 23.2H26.4L24.6 27Z" fill="#0c0c0c"/></svg>
<span class="t" style="left:149.1px;top:384px;font-size:19.2px;line-height:19.2px;color:#e3e3e3;letter-spacing:0.18px;">Line</span>
<svg class="a" style="left:107.6px;top:414.5px;font-family:'Liberation Sans',sans-serif;" width="28" height="31" viewBox="0 0 28 31"><path d="M2.2 5.2H24.6V25.8" fill="none" stroke="#0c0c0c" stroke-width="1.5"/><path d="M22.8 23.2H26.4L24.6 27Z" fill="#0c0c0c"/></svg>
<span class="t" style="left:149.1px;top:419px;font-size:19.2px;line-height:19.2px;color:#e3e3e3;letter-spacing:0.18px;">Line</span>
<svg class="a" style="left:107.6px;top:449.7px;font-family:'Liberation Sans',sans-serif;" width="28" height="31" viewBox="0 0 28 31"><circle cx="13.8" cy="15.6" r="12.4" fill="#fff" stroke="#111" stroke-width="2"/><text x="14.4" y="22" text-anchor="middle" font-size="17.6" font-weight="700" font-style="italic" fill="#000">A</text></svg>
<span class="t" style="left:149.1px;top:454px;font-size:19.2px;line-height:19.2px;color:#e3e3e3;letter-spacing:0.33px;">Circle</span>
<svg class="a" style="left:107.6px;top:484.9px;font-family:'Liberation Sans',sans-serif;" width="28" height="31" viewBox="0 0 28 31"><rect x="1" y="2.6" width="26" height="26.4" rx="2.4" fill="#fcf8c7" stroke="#79c47b" stroke-width="2.2"/><text x="14" y="21.8" text-anchor="middle" font-size="16" fill="#111">A</text></svg>
<span class="t" style="left:149.1px;top:490px;font-size:19.2px;line-height:19.2px;color:#e3e3e3;letter-spacing:0.36px;">Rectangle</span>
<svg class="a" style="left:107.6px;top:520.1px;font-family:'Liberation Sans',sans-serif;" width="28" height="31" viewBox="0 0 28 31"><path d="M2.2 5.2H24.6V25.8" fill="none" stroke="#0c0c0c" stroke-width="1.5"/><path d="M22.8 23.2H26.4L24.6 27Z" fill="#0c0c0c"/></svg>
<span class="t" style="left:149.1px;top:525px;font-size:19.2px;line-height:19.2px;color:#e3e3e3;letter-spacing:0.18px;">Line</span>
<svg class="a" style="left:107.6px;top:555.3px;font-family:'Liberation Sans',sans-serif;" width="28" height="31" viewBox="0 0 28 31"><path d="M2.2 5.2H24.6V25.8" fill="none" stroke="#0c0c0c" stroke-width="1.5"/><path d="M22.8 23.2H26.4L24.6 27Z" fill="#0c0c0c"/></svg>
<span class="t" style="left:149.1px;top:560px;font-size:19.2px;line-height:19.2px;color:#e3e3e3;letter-spacing:0.18px;">Line</span>
<svg class="a" style="left:107.6px;top:590.5px;font-family:'Liberation Sans',sans-serif;" width="28" height="31" viewBox="0 0 28 31"><rect x="1" y="2.6" width="26" height="26.4" rx="2.4" fill="#aee0ea" stroke="#1a1a1a" stroke-width="1.4"/><text x="14" y="21.8" text-anchor="middle" font-size="16" fill="#111">A</text></svg>
<span class="t" style="left:149.1px;top:595px;font-size:19.2px;line-height:19.2px;color:#e3e3e3;letter-spacing:0.36px;">Rectangle</span>
<svg class="a" style="left:107.6px;top:625.7px;font-family:'Liberation Sans',sans-serif;" width="28" height="31" viewBox="0 0 28 31"><circle cx="13.8" cy="15.6" r="12.4" fill="#fff" stroke="#111" stroke-width="2"/><text x="14.4" y="22" text-anchor="middle" font-size="17.6" font-weight="700" font-style="italic" fill="#000">A</text></svg>
<span class="t" style="left:149.1px;top:630px;font-size:19.2px;line-height:19.2px;color:#e3e3e3;letter-spacing:0.33px;">Circle</span>
<svg class="a" style="left:107.6px;top:660.9px;font-family:'Liberation Sans',sans-serif;" width="28" height="31" viewBox="0 0 28 31"><rect x="1" y="2.6" width="26" height="26.4" rx="2.4" fill="#fcf8c7" stroke="#1a1a1a" stroke-width="1.4"/><text x="14" y="21.8" text-anchor="middle" font-size="16" fill="#111">A</text></svg>
<span class="t" style="left:149.1px;top:666px;font-size:19.2px;line-height:19.2px;color:#e3e3e3;letter-spacing:0.36px;">Rectangle</span>
<svg class="a" style="left:107.6px;top:696.1px;font-family:'Liberation Sans',sans-serif;" width="28" height="31" viewBox="0 0 28 31"><path d="M1.6 4.8L24.8 27.6" fill="none" stroke="#0c0c0c" stroke-width="1.4"/></svg>
<span class="t" style="left:149.1px;top:701px;font-size:19.2px;line-height:19.2px;color:#e3e3e3;letter-spacing:0.18px;">Line</span>
<svg class="a" style="left:107.6px;top:731.3px;font-family:'Liberation Sans',sans-serif;" width="28" height="31" viewBox="0 0 28 31"><text x="14" y="22.4" text-anchor="middle" font-size="16.6" font-weight="700" font-style="italic" fill="#000">A</text></svg>
<span class="t" style="left:149.1px;top:736px;font-size:19.2px;line-height:19.2px;color:#e3e3e3;letter-spacing:0.46px;">4 weeks</span>
<svg class="a" style="left:107.6px;top:766.5px;font-family:'Liberation Sans',sans-serif;" width="28" height="31" viewBox="0 0 28 31"><circle cx="13.8" cy="15.6" r="12.4" fill="#fff" stroke="#111" stroke-width="2"/><text x="14.4" y="22" text-anchor="middle" font-size="17.6" font-weight="700" font-style="italic" fill="#000">A</text></svg>
<span class="t" style="left:149.1px;top:771px;font-size:19.2px;line-height:19.2px;color:#e3e3e3;letter-spacing:0.33px;">Circle</span>
<svg class="a" style="left:107.6px;top:801.7px;font-family:'Liberation Sans',sans-serif;" width="28" height="31" viewBox="0 0 28 31"><circle cx="13.8" cy="15.6" r="12.4" fill="#fff" stroke="#111" stroke-width="2"/><text x="14.4" y="22" text-anchor="middle" font-size="17.6" font-weight="700" font-style="italic" fill="#000">A</text></svg>
<span class="t" style="left:149.1px;top:806px;font-size:19.2px;line-height:19.2px;color:#e3e3e3;letter-spacing:0.33px;">Circle</span>
<svg class="a" style="left:107.6px;top:836.9px;font-family:'Liberation Sans',sans-serif;" width="28" height="31" viewBox="0 0 28 31"><circle cx="13.8" cy="15.6" r="12.4" fill="#fff" stroke="#111" stroke-width="2"/><text x="14.4" y="22" text-anchor="middle" font-size="17.6" font-weight="700" font-style="italic" fill="#000">A</text></svg>
<span class="t" style="left:149.1px;top:842px;font-size:19.2px;line-height:19.2px;color:#e3e3e3;letter-spacing:0.33px;">Circle</span>
<svg class="a" style="left:107.6px;top:872.1px;font-family:'Liberation Sans',sans-serif;" width="28" height="31" viewBox="0 0 28 31"><circle cx="13.8" cy="15.6" r="12.4" fill="#fff" stroke="#111" stroke-width="2"/><text x="14.4" y="22" text-anchor="middle" font-size="17.6" font-weight="700" font-style="italic" fill="#000">A</text></svg>
<span class="t" style="left:149.1px;top:877px;font-size:19.2px;line-height:19.2px;color:#e3e3e3;letter-spacing:0.33px;">Circle</span>
<svg class="a" style="left:107.6px;top:907.3px;font-family:'Liberation Sans',sans-serif;" width="28" height="31" viewBox="0 0 28 31"><text x="14" y="22.4" text-anchor="middle" font-size="16.6" font-weight="700" font-style="italic" fill="#000">A</text></svg>
<span class="t" style="left:149.1px;top:912px;font-size:19.2px;line-height:19.2px;color:#e3e3e3;letter-spacing:0.19px;">14 weeks</span>
<svg class="a" style="left:107.6px;top:942.5px;font-family:'Liberation Sans',sans-serif;" width="28" height="31" viewBox="0 0 28 31"><circle cx="13.8" cy="15.6" r="12.4" fill="#fff" stroke="#111" stroke-width="2" stroke-dasharray="3.2 2.6"/><text x="14.4" y="22" text-anchor="middle" font-size="17.6" font-weight="700" font-style="italic" fill="#000">A</text></svg>
<span class="t" style="left:149.1px;top:947px;font-size:19.2px;line-height:19.2px;color:#e3e3e3;letter-spacing:0.33px;">Circle</span>
<svg class="a" style="left:107.6px;top:977.7px;font-family:'Liberation Sans',sans-serif;" width="28" height="31" viewBox="0 0 28 31"><circle cx="13.8" cy="15.6" r="12.4" fill="#fff" stroke="#111" stroke-width="2" stroke-dasharray="3.2 2.6"/><text x="14.4" y="22" text-anchor="middle" font-size="17.6" font-weight="700" font-style="italic" fill="#000">A</text></svg>
<span class="t" style="left:149.1px;top:982px;font-size:19.2px;line-height:19.2px;color:#e3e3e3;letter-spacing:0.33px;">Circle</span>
<svg class="a" style="left:107.6px;top:1012.9px;font-family:'Liberation Sans',sans-serif;" width="28" height="31" viewBox="0 0 28 31"><circle cx="13.8" cy="15.6" r="12.4" fill="#fff" stroke="#111" stroke-width="2" stroke-dasharray="3.2 2.6"/><text x="14.4" y="22" text-anchor="middle" font-size="17.6" font-weight="700" font-style="italic" fill="#000">A</text></svg>
<span class="t" style="left:149.1px;top:1018px;font-size:19.2px;line-height:19.2px;color:#e3e3e3;letter-spacing:0.33px;">Circle</span>
<svg class="a" style="left:107.6px;top:1048.1px;font-family:'Liberation Sans',sans-serif;" width="28" height="31" viewBox="0 0 28 31"><circle cx="13.8" cy="15.6" r="12.4" fill="#fff" stroke="#111" stroke-width="2" stroke-dasharray="3.2 2.6"/><text x="14.4" y="22" text-anchor="middle" font-size="17.6" font-weight="700" font-style="italic" fill="#000">A</text></svg>
<span class="t" style="left:149.1px;top:1053px;font-size:19.2px;line-height:19.2px;color:#e3e3e3;letter-spacing:0.33px;">Circle</span>
<svg class="a" style="left:107.6px;top:1083.3px;font-family:'Liberation Sans',sans-serif;" width="28" height="31" viewBox="0 0 28 31"><circle cx="13.8" cy="15.6" r="12.4" fill="#fff" stroke="#111" stroke-width="2" stroke-dasharray="3.2 2.6"/><text x="14.4" y="22" text-anchor="middle" font-size="17.6" font-weight="700" font-style="italic" fill="#000">A</text></svg>
<span class="t" style="left:149.1px;top:1088px;font-size:19.2px;line-height:19.2px;color:#e3e3e3;letter-spacing:0.33px;">Circle</span>
<svg class="a" style="left:107.6px;top:1118.5px;font-family:'Liberation Sans',sans-serif;" width="28" height="31" viewBox="0 0 28 31"><circle cx="13.8" cy="15.6" r="12.4" fill="#fff" stroke="#111" stroke-width="2" stroke-dasharray="3.2 2.6"/><text x="14.4" y="22" text-anchor="middle" font-size="17.6" font-weight="700" font-style="italic" fill="#000">A</text></svg>
<span class="t" style="left:149.1px;top:1123px;font-size:19.2px;line-height:19.2px;color:#e3e3e3;letter-spacing:0.33px;">Circle</span>
<svg class="a" style="left:107.6px;top:1153.7px;font-family:'Liberation Sans',sans-serif;" width="28" height="31" viewBox="0 0 28 31"><circle cx="13.8" cy="15.6" r="12.4" fill="#fff" stroke="#111" stroke-width="2" stroke-dasharray="3.2 2.6"/><text x="14.4" y="22" text-anchor="middle" font-size="17.6" font-weight="700" font-style="italic" fill="#000">A</text></svg>
<span class="t" style="left:149.1px;top:1158px;font-size:19.2px;line-height:19.2px;color:#e3e3e3;letter-spacing:0.33px;">Circle</span>
<svg class="a" style="left:107.6px;top:1188.9px;font-family:'Liberation Sans',sans-serif;" width="28" height="31" viewBox="0 0 28 31"><circle cx="13.8" cy="15.6" r="12.4" fill="#fff" stroke="#111" stroke-width="2" stroke-dasharray="3.2 2.6"/><text x="14.4" y="22" text-anchor="middle" font-size="17.6" font-weight="700" font-style="italic" fill="#000">A</text></svg>
<span class="t" style="left:149.1px;top:1194px;font-size:19.2px;line-height:19.2px;color:#e3e3e3;letter-spacing:0.33px;">Circle</span>
<svg class="a" style="left:107.6px;top:1224.1px;font-family:'Liberation Sans',sans-serif;" width="28" height="31" viewBox="0 0 28 31"><circle cx="13.8" cy="15.6" r="12.4" fill="#fff" stroke="#111" stroke-width="2" stroke-dasharray="3.2 2.6"/><text x="14.4" y="22" text-anchor="middle" font-size="17.6" font-weight="700" font-style="italic" fill="#000">A</text></svg>
<span class="t" style="left:149.1px;top:1229px;font-size:19.2px;line-height:19.2px;color:#e3e3e3;letter-spacing:0.33px;">Circle</span>
<svg class="a" style="left:107.6px;top:1259.3px;font-family:'Liberation Sans',sans-serif;" width="28" height="31" viewBox="0 0 28 31"><text x="13.6" y="22" text-anchor="middle" font-size="15.6" fill="#000">A</text></svg>
<span class="t" style="left:149.1px;top:1264px;font-size:19.2px;line-height:19.2px;color:#e3e3e3;letter-spacing:0.39px;">Turnaround Time (in we...</span>
<svg class="a" style="left:107.6px;top:1294.5px;font-family:'Liberation Sans',sans-serif;" width="28" height="31" viewBox="0 0 28 31"><circle cx="13.8" cy="15.6" r="12.4" fill="#fff" stroke="#111" stroke-width="2" stroke-dasharray="3.2 2.6"/><text x="14.4" y="22" text-anchor="middle" font-size="17.6" font-weight="700" font-style="italic" fill="#000">A</text></svg>
<span class="t" style="left:149.1px;top:1299px;font-size:19.2px;line-height:19.2px;color:#e3e3e3;letter-spacing:0.33px;">Circle</span>
<svg class="a" style="left:107.6px;top:1329.7px;font-family:'Liberation Sans',sans-serif;" width="28" height="31" viewBox="0 0 28 31"><circle cx="13.8" cy="15.6" r="12.4" fill="#fff" stroke="#111" stroke-width="2"/><text x="14.4" y="22" text-anchor="middle" font-size="17.6" font-weight="700" font-style="italic" fill="#000">A</text></svg>
<span class="t" style="left:149.1px;top:1334px;font-size:19.2px;line-height:19.2px;color:#e3e3e3;letter-spacing:0.33px;">Circle</span>
<svg class="a" style="left:107.6px;top:1364.9px;font-family:'Liberation Sans',sans-serif;" width="28" height="31" viewBox="0 0 28 31"><circle cx="13.8" cy="15.6" r="12.4" fill="#fff" stroke="#111" stroke-width="2"/><text x="14.4" y="22" text-anchor="middle" font-size="17.6" font-weight="700" font-style="italic" fill="#000">A</text></svg>
<span class="t" style="left:149.1px;top:1370px;font-size:19.2px;line-height:19.2px;color:#e3e3e3;letter-spacing:0.33px;">Circle</span>
<svg class="a" style="left:107.6px;top:1400.1px;font-family:'Liberation Sans',sans-serif;" width="28" height="31" viewBox="0 0 28 31"><circle cx="13.8" cy="15.6" r="12.4" fill="#fff" stroke="#111" stroke-width="2" stroke-dasharray="3.2 2.6"/><text x="14.4" y="22" text-anchor="middle" font-size="17.6" font-weight="700" font-style="italic" fill="#000">A</text></svg>
<span class="t" style="left:149.1px;top:1405px;font-size:19.2px;line-height:19.2px;color:#e3e3e3;letter-spacing:0.33px;">Circle</span>
<svg class="a" style="left:107.6px;top:1435.3px;font-family:'Liberation Sans',sans-serif;" width="28" height="31" viewBox="0 0 28 31"><circle cx="13.8" cy="15.6" r="12.4" fill="#fff" stroke="#111" stroke-width="2" stroke-dasharray="3.2 2.6"/><text x="14.4" y="22" text-anchor="middle" font-size="17.6" font-weight="700" font-style="italic" fill="#000">A</text></svg>
<span class="t" style="left:149.1px;top:1440px;font-size:19.2px;line-height:19.2px;color:#e3e3e3;letter-spacing:0.33px;">Circle</span>
<svg class="a" style="left:107.6px;top:1470.5px;font-family:'Liberation Sans',sans-serif;" width="28" height="31" viewBox="0 0 28 31"><circle cx="13.8" cy="15.6" r="12.4" fill="#fff" stroke="#111" stroke-width="2" stroke-dasharray="3.2 2.6"/><text x="14.4" y="22" text-anchor="middle" font-size="17.6" font-weight="700" font-style="italic" fill="#000">A</text></svg>
<span class="t" style="left:149.1px;top:1475px;font-size:19.2px;line-height:19.2px;color:#e3e3e3;letter-spacing:0.33px;">Circle</span>
<svg class="a" style="left:107.6px;top:1505.7px;font-family:'Liberation Sans',sans-serif;" width="28" height="31" viewBox="0 0 28 31"><circle cx="13.8" cy="15.6" r="12.4" fill="#fff" stroke="#111" stroke-width="2" stroke-dasharray="3.2 2.6"/><text x="14.4" y="22" text-anchor="middle" font-size="17.6" font-weight="700" font-style="italic" fill="#000">A</text></svg>
<span class="t" style="left:149.1px;top:1510px;font-size:19.2px;line-height:19.2px;color:#e3e3e3;letter-spacing:0.33px;">Circle</span>
<svg class="a" style="left:107.6px;top:1540.9px;font-family:'Liberation Sans',sans-serif;" width="28" height="31" viewBox="0 0 28 31"><circle cx="13.8" cy="15.6" r="12.4" fill="#fff" stroke="#111" stroke-width="2" stroke-dasharray="3.2 2.6"/><text x="14.4" y="22" text-anchor="middle" font-size="17.6" font-weight="700" font-style="italic" fill="#000">A</text></svg>
<span class="t" style="left:149.1px;top:1546px;font-size:19.2px;line-height:19.2px;color:#e3e3e3;letter-spacing:0.33px;">Circle</span>
<svg class="a" style="left:107.6px;top:1576.1px;font-family:'Liberation Sans',sans-serif;" width="28" height="31" viewBox="0 0 28 31"><circle cx="13.8" cy="15.6" r="12.4" fill="#fff" stroke="#111" stroke-width="2" stroke-dasharray="3.2 2.6"/><text x="14.4" y="22" text-anchor="middle" font-size="17.6" font-weight="700" font-style="italic" fill="#000">A</text></svg>
<span class="t" style="left:149.1px;top:1581px;font-size:19.2px;line-height:19.2px;color:#e3e3e3;letter-spacing:0.33px;">Circle</span>
</div>
<div style="left:13px;top:1607px;width:286.6px;height:29.4px;background:#434446;border-radius:6px;box-shadow:inset 0 0 0 1px rgba(255,255,255,.06),inset 0 -1px 0 rgba(255,255,255,.10);"></div>
<svg class="a" style="left:21px;top:1611.6px;" width="20" height="20" viewBox="0 0 20 20"><circle cx="8.4" cy="8.6" r="6.2" fill="none" stroke="#d0d0d0" stroke-width="1.6"/><path d="M12.8 13.2L18 18.6" stroke="#d0d0d0" stroke-width="1.8" stroke-linecap="round"/></svg>
<span class="t" style="left:49.7px;top:1613px;font-size:19.2px;line-height:19.2px;color:#8b8c8d;letter-spacing:-0.63px;">Search</span>
<div class="btn" style="left:315px;top:1605.8px;width:60.8px;height:31.6px;border-radius:6px;"></div>
<svg class="a" style="left:323.6px;top:1610.2px;" width="23" height="23" viewBox="0 0 23 23"><path d="M22.83 9.55L22.83 13.45L19.34 13.34L18.34 15.74L20.89 18.14L18.14 20.89L15.74 18.34L13.34 19.34L13.45 22.83L9.55 22.83L9.66 19.34L7.26 18.34L4.86 20.89L2.11 18.14L4.66 15.74L3.66 13.34L0.17 13.45L0.17 9.55L3.66 9.66L4.66 7.26L2.11 4.86L4.86 2.11L7.26 4.66L9.66 3.66L9.55 0.17L13.45 0.17L13.34 3.66L15.74 4.66L18.14 2.11L20.89 4.86L18.34 7.26L19.34 9.66Z" fill="#dedede" stroke="#dedede" stroke-width="1.2" stroke-linejoin="round"/><circle cx="11.5" cy="11.5" r="3.45" fill="#6a6867"/></svg>
<svg class="a" style="left:355.6px;top:1615px;" width="16" height="12" viewBox="0 0 16 12"><path d="M2.2 2.6L8 8.6L13.8 2.6" fill="none" stroke="#ededed" stroke-width="2" stroke-linecap="round" stroke-linejoin="round"/></svg>
<svg class="a" style="left:1854.6px;top:114.2px;" width="32" height="31" viewBox="0 0 32 31"><rect x="0.6" y="0.6" width="20.6" height="20.6" fill="#4a76d2"/><g fill="none" stroke="#4a76d2" stroke-width="1.5"><path d="M26.6 22V1.6M23 5.2L26.6 1.4L30.2 5.2"/><path d="M21.6 26.6H1.6M5.2 23L1.4 26.6L5.2 30.2"/></g><g fill="#4a76d2"><rect x="23.4" y="23.4" width="3" height="3"/><rect x="27.4" y="23.4" width="3" height="3"/><rect x="23.4" y="27.4" width="3" height="3"/><rect x="27.4" y="27.4" width="3" height="3"/></g></svg>
<svg class="a" style="left:1909.4px;top:114.8px;" width="29.4" height="29.4" viewBox="0 0 29.4 29.4"><path d="M29.19 12.21L29.19 17.19L24.72 17.05L23.45 20.12L26.7 23.19L23.19 26.7L20.13 23.44L17.05 24.72L17.19 29.19L12.21 29.19L12.35 24.72L9.28 23.45L6.21 26.7L2.7 23.19L5.96 20.13L4.68 17.05L0.21 17.19L0.21 12.21L4.68 12.35L5.95 9.28L2.7 6.21L6.21 2.7L9.27 5.96L12.35 4.68L12.21 0.21L17.19 0.21L17.05 4.68L20.12 5.95L23.19 2.7L26.7 6.21L23.44 9.27L24.72 12.35Z" fill="#c9c8c6" stroke="#c9c8c6" stroke-width="1.2" stroke-linejoin="round"/><circle cx="14.7" cy="14.7" r="4.41" fill="#333436"/></svg>
<svg class="a" style="left:1963.8px;top:114.8px;" width="30" height="30" viewBox="0 0 30 30"><rect x="0.2" y="0.2" width="29.4" height="29.4" fill="#c9c8c6"/><g stroke="#333436" stroke-width="1.5" fill="none"><path d="M7.6 0V26M0 7.6H26"/></g><path d="M5 23H10.2L7.6 27.4ZM23 5V10.2L27.4 7.6Z" fill="#333436"/></svg>
<svg class="a" style="left:2021.4px;top:114.8px;" width="24" height="30" viewBox="0 0 24 30"><path d="M0.2 0.2H14.6L23.6 9.2V29.6H0.2Z" fill="#c9c8c6"/><path d="M14.6 0.2V9.2H23.6" fill="#e4e3e2" stroke="#333436" stroke-width="1.2"/></svg>
<svg class="a" style="left:2273px;top:114.8px;" width="30" height="30" viewBox="0 0 30 30"><rect x="1.4" y="1.4" width="26.6" height="26.6" rx="3.6" fill="none" stroke="#c9c8c6" stroke-width="2.8"/><path d="M14.7 2V27.6M2 14.7H27.6" stroke="#c9c8c6" stroke-width="2.8"/></svg>
<span class="t" style="left:1849.1px;top:160px;font-size:17.6px;line-height:17.6px;color:#e8e8e8;letter-spacing:0.86px;">Object</span>
<svg class="a" style="left:1863.8px;top:204.6px;" width="14" height="12.4" viewBox="0 0 14 12.4"><path d="M0 0H14L7 12.4Z" fill="#9a9998"/></svg>
<span class="t" style="left:1883.2px;top:203px;font-size:17.6px;line-height:17.6px;color:#f2f2f2;font-weight:700;letter-spacing:0.05px;">Fill</span>
<svg class="a" style="left:2281px;top:204.6px;" width="22" height="13" viewBox="0 0 22 13"><path d="M0 1H21M0 6.2H21M0 11.4H21" stroke="#9d9c9b" stroke-width="1.3"/></svg>
<div class="dd" style="left:1878px;top:235.3px;width:406.5px;height:25.4px;"></div>
<div style="left:2262.1px;top:235.3px;width:22.4px;height:25.4px;background:linear-gradient(#4267bf,#3a5cb0);border-radius:0 6px 6px 0;"></div>
<svg class="a" style="left:2262.1px;top:235.3px;" width="22.4" height="25.4" viewBox="0 0 22.4 25.4"><path d="M6.6 10.1L11.2 5.8L15.8 10.1M6.6 15.3L11.2 19.6L15.8 15.3" fill="none" stroke="#fff" stroke-width="1.8" stroke-linecap="round" stroke-linejoin="round"/></svg>
<span class="t" style="left:1921.8px;top:240px;font-size:17.6px;line-height:17.6px;color:#ececec;letter-spacing:0.31px;">Solid Fill</span>
<div style="left:1892.3px;top:238.7px;width:19.4px;height:18.8px;background:#eae9e8;"></div>
<div style="left:1874.8px;top:276.6px;width:105px;height:26.4px;background:#454443;box-shadow:inset 0 0 0 1px rgba(255,255,255,.13);"></div>
<div style="left:1883.2px;top:284.6px;width:88.6px;height:10px;background:#fcf9c0;box-shadow:0 0 0 1.2px #6a6968;"></div>
<div style="left:1979.6px;top:276.6px;width:23.2px;height:26.4px;background:linear-gradient(#4267bf,#3a5cb0);border-radius:0 6px 6px 0;"></div>
<svg class="a" style="left:1979.6px;top:276.6px;" width="23.2" height="26.4" viewBox="0 0 23.2 26.4"><path d="M7 10.6L11.6 6.3L16.2 10.6M7 15.8L11.6 20.1L16.2 15.8" fill="none" stroke="#fff" stroke-width="1.8" stroke-linecap="round" stroke-linejoin="round"/></svg>
<div style="left:1877.5px;top:317.4px;width:55.8px;height:56.4px;background:#060504;border-radius:15px;box-shadow:inset 0 0 0 1.2px rgba(255,255,255,.10);"></div>
<div style="left:1947.86px;top:317.4px;width:55.8px;height:56.4px;background:#323130;border-radius:15px;box-shadow:inset 0 0 0 1.2px rgba(255,255,255,.10);"></div>
<div style="left:2018.22px;top:317.4px;width:55.8px;height:56.4px;background:#676766;border-radius:15px;box-shadow:inset 0 0 0 1.2px rgba(255,255,255,.10);"></div>
<div style="left:2088.58px;top:317.4px;width:55.8px;height:56.4px;background:#999897;border-radius:15px;"></div>
<div style="left:2158.94px;top:317.4px;width:55.8px;height:56.4px;background:#cccbca;border-radius:15px;"></div>
<div style="left:2229.3px;top:317.4px;width:55.8px;height:56.4px;background:#ffffff;border-radius:15px;"></div>
<div style="left:1876.8px;top:387.8px;width:24.6px;height:24.6px;background:#3c50a5;border-radius:6.5px;"></div>
<div style="left:1908.8px;top:387.8px;width:24.6px;height:24.6px;background:#4f59a9;border-radius:6.5px;"></div>
<div style="left:1947.2px;top:387.8px;width:24.6px;height:24.6px;background:#e93323;border-radius:6.5px;"></div>
<div style="left:1979.2px;top:387.8px;width:24.6px;height:24.6px;background:#ee5249;border-radius:6.5px;"></div>
<div style="left:2017.6px;top:387.8px;width:24.6px;height:24.6px;background:#ac53a1;border-radius:6.5px;"></div>
<div style="left:2049.6px;top:387.8px;width:24.6px;height:24.6px;background:#b867ab;border-radius:6.5px;"></div>
<div style="left:2088px;top:387.8px;width:24.6px;height:24.6px;background:#8fc73e;border-radius:6.5px;"></div>
<div style="left:2120px;top:387.8px;width:24.6px;height:24.6px;background:#9dce56;border-radius:6.5px;"></div>
<div style="left:2158.4px;top:387.8px;width:24.6px;height:24.6px;background:#8dd3e0;border-radius:6.5px;"></div>
<div style="left:2190.6px;top:387.8px;width:24.6px;height:24.6px;background:#9edbe7;border-radius:6.5px;"></div>
<div style="left:2228.9px;top:387.8px;width:24.6px;height:24.6px;background:#f8ea4f;border-radius:6.5px;"></div>
<div style="left:2261px;top:387.8px;width:24.6px;height:24.6px;background:#f9ee6b;border-radius:6.5px;"></div>
<div style="left:1876.8px;top:419.8px;width:24.6px;height:24.6px;background:#7b7cc0;border-radius:6.5px;"></div>
<div style="left:1908.8px;top:419.8px;width:24.6px;height:24.6px;background:#c1bee0;border-radius:6.5px;"></div>
<div style="left:1947.2px;top:419.8px;width:24.6px;height:24.6px;background:#f08786;border-radius:6.5px;"></div>
<div style="left:1979.2px;top:419.8px;width:24.6px;height:24.6px;background:#f8c4c3;border-radius:6.5px;"></div>
<div style="left:2017.6px;top:419.8px;width:24.6px;height:24.6px;background:#cc8bc2;border-radius:6.5px;"></div>
<div style="left:2049.6px;top:419.8px;width:24.6px;height:24.6px;background:#e8c4e1;border-radius:6.5px;"></div>
<div style="left:2088px;top:419.8px;width:24.6px;height:24.6px;background:#acd586;border-radius:6.5px;"></div>
<div style="left:2120px;top:419.8px;width:24.6px;height:24.6px;background:#d0e8be;border-radius:6.5px;"></div>
<div style="left:2158.4px;top:419.8px;width:24.6px;height:24.6px;background:#9fdbe8;border-radius:6.5px;"></div>
<div style="left:2190.6px;top:419.8px;width:24.6px;height:24.6px;background:#d3eef5;border-radius:6.5px;"></div>
<div style="left:2228.9px;top:419.8px;width:24.6px;height:24.6px;background:#f9ef8c;border-radius:6.5px;"></div>
<div style="left:2261px;top:419.8px;width:24.6px;height:24.6px;background:#fcf8c9;border-radius:6.5px;"></div>
<div class="dd" style="left:1878px;top:457.7px;width:406.5px;height:25.4px;"></div>
<div style="left:2262.1px;top:457.7px;width:22.4px;height:25.4px;background:linear-gradient(#4267bf,#3a5cb0);border-radius:0 6px 6px 0;"></div>
<svg class="a" style="left:2262.1px;top:457.7px;" width="22.4" height="25.4" viewBox="0 0 22.4 25.4"><path d="M6.6 10.1L11.2 5.8L15.8 10.1M6.6 15.3L11.2 19.6L15.8 15.3" fill="none" stroke="#fff" stroke-width="1.8" stroke-linecap="round" stroke-linejoin="round"/></svg>
<span class="t" style="left:1889.6px;top:463px;font-size:17.6px;line-height:17.6px;color:#ececec;letter-spacing:0.45px;">Normal</span>
<div class="dd" style="left:1878px;top:504.2px;width:265.8px;height:25.4px;"></div>
<div style="left:2121.4px;top:504.2px;width:22.4px;height:25.4px;background:linear-gradient(#4267bf,#3a5cb0);border-radius:0 6px 6px 0;"></div>
<svg class="a" style="left:2121.4px;top:504.2px;" width="22.4" height="25.4" viewBox="0 0 22.4 25.4"><path d="M6.6 10.1L11.2 5.8L15.8 10.1M6.6 15.3L11.2 19.6L15.8 15.3" fill="none" stroke="#fff" stroke-width="1.8" stroke-linecap="round" stroke-linejoin="round"/></svg>
<span class="t" style="left:1889.6px;top:509px;font-size:17.6px;line-height:17.6px;color:#ececec;letter-spacing:0.66px;">No Effect</span>
<div style="left:1860.5px;top:547.6px;width:444.5px;height:1.3px;background:#3e3d3c;"></div>
<svg class="a" style="left:1863.8px;top:565.4px;" width="14" height="12.4" viewBox="0 0 14 12.4"><path d="M0 0H14L7 12.4Z" fill="#9a9998"/></svg>
<span class="t" style="left:1883.2px;top:564px;font-size:17.6px;line-height:17.6px;color:#f2f2f2;font-weight:700;letter-spacing:0.61px;">Stroke</span>
<svg class="a" style="left:2281px;top:565.4px;" width="22" height="13" viewBox="0 0 22 13"><path d="M0 1H21M0 6.2H21M0 11.4H21" stroke="#9d9c9b" stroke-width="1.3"/></svg>
<div class="dd" style="left:1878px;top:597.1px;width:406.5px;height:25.4px;"></div>
<div style="left:2262.1px;top:597.1px;width:22.4px;height:25.4px;background:linear-gradient(#4267bf,#3a5cb0);border-radius:0 6px 6px 0;"></div>
<svg class="a" style="left:2262.1px;top:597.1px;" width="22.4" height="25.4" viewBox="0 0 22.4 25.4"><path d="M6.6 10.1L11.2 5.8L15.8 10.1M6.6 15.3L11.2 19.6L15.8 15.3" fill="none" stroke="#fff" stroke-width="1.8" stroke-linecap="round" stroke-linejoin="round"/></svg>
<span class="t" style="left:1921.8px;top:602px;font-size:17.6px;line-height:17.6px;color:#ececec;letter-spacing:0.44px;">Single Stroke</span>
<div style="left:1892.6px;top:600.6px;width:18.8px;height:18.4px;box-shadow:inset 0 0 0 1.3px #d2d1d0;"></div>
<svg class="a" style="left:1876.4px;top:638px;" width="27" height="27" viewBox="0 0 27 27"><g stroke="#d8d8d7" fill="none"><path d="M1.6 4.6H25.6" stroke-width="6.4"/><path d="M1.6 15.2H25.6" stroke-width="3.6"/><path d="M1 23.2H26" stroke-width="1.3"/><path d="M3.4 21L1 23.2L3.4 25.4M23.6 21L26 23.2L23.6 25.4" stroke-width="1.1"/></g></svg>
<div class="fld" style="left:1910.9px;top:638.4px;width:92.6px;height:28.4px;"></div>
<div style="left:1986.1px;top:639.4px;width:1.2px;height:26.4px;background:rgba(255,255,255,.07);"></div>
<svg class="a" style="left:1986.1px;top:638.4px;" width="17.4" height="28.4" viewBox="0 0 17.4 28.4"><path d="M4.1 11.6L8.7 7.3L13.3 11.6M4.1 16.8L8.7 21.1L13.3 16.8" fill="none" stroke="#d6d6d6" stroke-width="1.7" stroke-linecap="round" stroke-linejoin="round"/></svg>
<span class="t" style="left:1916.6px;top:645px;font-size:17.6px;line-height:17.6px;color:#e4e4e4;letter-spacing:0.31px;">1 pt</span>
<div style="left:2015.5px;top:638.4px;width:80px;height:26.6px;background:#454443;box-shadow:inset 0 0 0 1px rgba(255,255,255,.13);"></div>
<div style="left:2024px;top:646.4px;width:62.6px;height:10.2px;background:#050403;box-shadow:0 0 0 1.2px #6a6968;"></div>
<div style="left:2095.2px;top:638.4px;width:22.6px;height:26.6px;background:linear-gradient(#4267bf,#3a5cb0);border-radius:0 6px 6px 0;"></div>
<svg class="a" style="left:2095.2px;top:638.4px;" width="22.6" height="26.6" viewBox="0 0 22.6 26.6"><path d="M6.7 10.7L11.3 6.4L15.9 10.7M6.7 15.9L11.3 20.2L15.9 15.9" fill="none" stroke="#fff" stroke-width="1.8" stroke-linecap="round" stroke-linejoin="round"/></svg>
<div class="dd" style="left:1878px;top:678.6px;width:124.8px;height:25.6px;"></div>
<div style="left:1980.4px;top:678.6px;width:22.4px;height:25.6px;background:linear-gradient(#4267bf,#3a5cb0);border-radius:0 6px 6px 0;"></div>
<svg class="a" style="left:1980.4px;top:678.6px;" width="22.4" height="25.6" viewBox="0 0 22.4 25.6"><path d="M6.6 10.2L11.2 5.9L15.8 10.2M6.6 15.4L11.2 19.7L15.8 15.4" fill="none" stroke="#fff" stroke-width="1.8" stroke-linecap="round" stroke-linejoin="round"/></svg>
<svg class="a" style="left:1878px;top:678.6px;" width="102" height="25.6" viewBox="0 0 102 25.6"><path d="M12 13.4H92" stroke="#e0e0e0" stroke-width="1.3"/></svg>
<div class="dd" style="left:2022.1px;top:678.6px;width:124.9px;height:25.6px;"></div>
<div style="left:2065.2px;top:678.6px;width:41.8px;height:25.6px;background:linear-gradient(#4267bf,#3a5cb0);"></div>
<svg class="a" style="left:2022.1px;top:678.6px;" width="124.9" height="25.6" viewBox="0 0 124.9 25.6"><g fill="none" stroke="#f0f0f0" stroke-width="1.5"><path d="M10.2 20.4V5.6H32.4"/><path d="M52.4 20.4C53 11.4 60 5.6 73.6 5.6"/><path d="M93.6 20.4V15.6L100.6 5.6H115.4"/></g></svg>
<div class="dd" style="left:2162.8px;top:678.6px;width:124.9px;height:25.6px;"></div>
<div style="left:2205.8px;top:678.6px;width:42px;height:25.6px;background:linear-gradient(#4267bf,#3a5cb0);"></div>
<svg class="a" style="left:2162.8px;top:678.6px;" width="124.9" height="25.6" viewBox="0 0 124.9 25.6"><g fill="none" stroke="#f0f0f0" stroke-width="1.5"><path d="M6.4 7.6H35.4M6.4 18.6H35.4"/><rect x="48.6" y="7.4" width="28" height="11.4" rx="5.7"/><rect x="90.2" y="7.6" width="28" height="11"/></g></svg>
<div style="left:1860.5px;top:729.7px;width:444.5px;height:1.3px;background:#3e3d3c;"></div>
<svg class="a" style="left:1864.6px;top:747.2px;" width="12.6" height="14" viewBox="0 0 12.6 14"><path d="M0 0V14L12.4 7Z" fill="#9a9998"/></svg>
<span class="t" style="left:1883.2px;top:746px;font-size:17.6px;line-height:17.6px;color:#f2f2f2;font-weight:700;letter-spacing:0.43px;">Shadow</span>
<svg class="a" style="left:2281px;top:748.2px;" width="22" height="13" viewBox="0 0 22 13"><path d="M0 1H21M0 6.2H21M0 11.4H21" stroke="#9d9c9b" stroke-width="1.3"/></svg>
<div style="left:1860.5px;top:781.5px;width:444.5px;height:1.3px;background:#3e3d3c;"></div>
<svg class="a" style="left:1863.8px;top:799.4px;" width="14" height="12.4" viewBox="0 0 14 12.4"><path d="M0 0H14L7 12.4Z" fill="#9a9998"/></svg>
<span class="t" style="left:1883.2px;top:798px;font-size:17.6px;line-height:17.6px;color:#f2f2f2;font-weight:700;letter-spacing:0.48px;">Shape</span>
<svg class="a" style="left:2281px;top:799.4px;" width="22" height="13" viewBox="0 0 22 13"><path d="M0 1H21M0 6.2H21M0 11.4H21" stroke="#9d9c9b" stroke-width="1.3"/></svg>
<div style="left:1878px;top:830.9px;width:406.5px;height:47.6px;background:linear-gradient(#747372,#6c6b6a);border-radius:6.5px;box-shadow:0 1px 1px rgba(0,0,0,.35),inset 0 1px 0 rgba(255,255,255,.08);"></div>
<div style="left:1886.6px;top:839.2px;width:35.4px;height:34.6px;background:#ffffff;box-shadow:0 0 0 1.4px #555453;"></div>
<span class="t" style="left:2060.04px;top:847px;font-size:17.6px;line-height:17.6px;color:#ececec;letter-spacing:0.49px;">Rectangle</span>
<svg class="a" style="left:1876.2px;top:894.6px;" width="28" height="28" viewBox="0 0 28 28"><g fill="none" stroke="#d6d6d6" stroke-width="1.3"><path d="M4.2 24.2C4.6 13.6 11.6 6 22.6 4.4"/><path d="M4.2 6.2V22M6.6 4.2H20.6" stroke-width="1"/><path d="M4.2 1.4L7 4.2L4.2 7L1.4 4.2Z" fill="#323130"/><path d="M23.2 1.6L26 4.4L23.2 7.2L20.4 4.4Z" fill="#323130"/><path d="M4.2 21.4L7 24.2L4.2 27L1.4 24.2Z" fill="#323130"/></g></svg>
<div class="fld" style="left:1910.9px;top:894.2px;width:92.6px;height:28.4px;"></div>
<div style="left:1986.1px;top:895.2px;width:1.2px;height:26.4px;background:rgba(255,255,255,.07);"></div>
<svg class="a" style="left:1986.1px;top:894.2px;" width="17.4" height="28.4" viewBox="0 0 17.4 28.4"><path d="M4.1 11.6L8.7 7.3L13.3 11.6M4.1 16.8L8.7 21.1L13.3 16.8" fill="none" stroke="#d6d6d6" stroke-width="1.7" stroke-linecap="round" stroke-linejoin="round"/></svg>
<span class="t" style="left:1916.6px;top:901px;font-size:17.6px;line-height:17.6px;color:#e4e4e4;letter-spacing:0.76px;">2 pt</span>
<div style="left:1878px;top:938.2px;width:54.5px;height:25.5px;background:#555453;border-radius:6px;box-shadow:0 1px 1px rgba(0,0,0,.3);"></div>
<svg class="a" style="left:1878px;top:938.2px;" width="54.5" height="25.5" viewBox="0 0 54.5 25.5"><g fill="none" stroke="#777675" stroke-width="1.4"><path d="M18 4.6H30.4V11.2C40 10.6 39.6 23.6 30.4 23.2C26 23.4 23.4 20 23.6 16.2H18Z"/></g></svg>
<div style="left:1948.3px;top:938.2px;width:54.5px;height:25.5px;background:#555453;border-radius:6px;box-shadow:0 1px 1px rgba(0,0,0,.3);"></div>
<svg class="a" style="left:1948.3px;top:938.2px;" width="54.5" height="25.5" viewBox="0 0 54.5 25.5"><g fill="none" stroke="#777675" stroke-width="1.4"><rect x="18" y="4.6" width="12" height="11.6"/><circle cx="29.8" cy="17.4" r="6"/></g></svg>
<div style="left:2018.7px;top:938.2px;width:54.5px;height:25.5px;background:#555453;border-radius:6px;box-shadow:0 1px 1px rgba(0,0,0,.3);"></div>
<svg class="a" style="left:2018.7px;top:938.2px;" width="54.5" height="25.5" viewBox="0 0 54.5 25.5"><g fill="none" stroke="#777675" stroke-width="1.4"><path d="M29.6 12V4.6H18V16.2H23.4"/><circle cx="29.8" cy="17.4" r="6"/></g></svg>
<div style="left:2230px;top:938.2px;width:54.5px;height:25.5px;background:#555453;border-radius:6px;box-shadow:0 1px 1px rgba(0,0,0,.3);"></div>
<svg class="a" style="left:2230px;top:938.2px;" width="54.5" height="25.5" viewBox="0 0 54.5 25.5"><g fill="none" stroke="#777675" stroke-width="1.4"><rect x="18" y="4.6" width="12" height="11.6"/><circle cx="29.8" cy="17.4" r="6"/></g></svg>
<div style="left:1860.5px;top:989.6px;width:444.5px;height:1.3px;background:#3e3d3c;"></div>
<svg class="a" style="left:1863.8px;top:1006.4px;" width="14" height="12.4" viewBox="0 0 14 12.4"><path d="M0 0H14L7 12.4Z" fill="#9a9998"/></svg>
<span class="t" style="left:1883.2px;top:1005px;font-size:17.6px;line-height:17.6px;color:#f2f2f2;font-weight:700;letter-spacing:0.11px;">Line</span>
<svg class="a" style="left:2281px;top:1006.4px;" width="22" height="13" viewBox="0 0 22 13"><path d="M0 1H21M0 6.2H21M0 11.4H21" stroke="#9d9c9b" stroke-width="1.3"/></svg>
<div class="dd" style="left:1878px;top:1037.4px;width:406.5px;height:25.4px;"></div>
<div style="left:2262.1px;top:1037.4px;width:22.4px;height:25.4px;background:linear-gradient(#4267bf,#3a5cb0);border-radius:0 6px 6px 0;"></div>
<svg class="a" style="left:2262.1px;top:1037.4px;" width="22.4" height="25.4" viewBox="0 0 22.4 25.4"><path d="M6.6 10.1L11.2 5.8L15.8 10.1M6.6 15.3L11.2 19.6L15.8 15.3" fill="none" stroke="#fff" stroke-width="1.8" stroke-linecap="round" stroke-linejoin="round"/></svg>
<span class="t" style="left:1941.5px;top:1042px;font-size:17.6px;line-height:17.6px;color:#ececec;letter-spacing:0.75px;">Straight</span>
<svg class="a" style="left:1891px;top:1040px;" width="24" height="21" viewBox="0 0 24 21"><path d="M3 18.6L19.4 2.4" stroke="#a3a2a1" stroke-width="1.4"/><circle cx="3" cy="18.6" r="1.6" fill="none" stroke="#a3a2a1" stroke-width="1"/><circle cx="19.4" cy="2.4" r="1.6" fill="none" stroke="#a3a2a1" stroke-width="1"/></svg>
<div class="dd" style="left:1878px;top:1079.4px;width:114.8px;height:25.4px;"></div>
<div style="left:1970.4px;top:1079.4px;width:22.4px;height:25.4px;background:linear-gradient(#4267bf,#3a5cb0);border-radius:0 6px 6px 0;"></div>
<svg class="a" style="left:1970.4px;top:1079.4px;" width="22.4" height="25.4" viewBox="0 0 22.4 25.4"><path d="M6.6 10.1L11.2 5.8L15.8 10.1M6.6 15.3L11.2 19.6L15.8 15.3" fill="none" stroke="#fff" stroke-width="1.8" stroke-linecap="round" stroke-linejoin="round"/></svg>
<svg class="a" style="left:1878px;top:1079.4px;" width="92" height="25.4" viewBox="0 0 92 25.4"><path d="M15 12.8H85" stroke="#e0e0e0" stroke-width="1.3"/></svg>
<div class="btn" style="left:2018.7px;top:1079.4px;width:125.1px;height:25.4px;border-radius:6px;"></div>
<svg class="a" style="left:2018.7px;top:1079.4px;" width="125.1" height="25.4" viewBox="0 0 125.1 25.4"><path d="M54.4 8.2H70.4M65.4 3.6L70.6 8.2L65.4 12.8M71 17.6H54.6M59.6 13L54.4 17.6L59.6 22.2" fill="none" stroke="#eaeaea" stroke-width="1.6" stroke-linecap="round" stroke-linejoin="round"/></svg>
<div class="dd" style="left:2169.2px;top:1079.4px;width:115.3px;height:25.4px;"></div>
<div style="left:2262.1px;top:1079.4px;width:22.4px;height:25.4px;background:linear-gradient(#4267bf,#3a5cb0);border-radius:0 6px 6px 0;"></div>
<svg class="a" style="left:2262.1px;top:1079.4px;" width="22.4" height="25.4" viewBox="0 0 22.4 25.4"><path d="M6.6 10.1L11.2 5.8L15.8 10.1M6.6 15.3L11.2 19.6L15.8 15.3" fill="none" stroke="#fff" stroke-width="1.8" stroke-linecap="round" stroke-linejoin="round"/></svg>
<svg class="a" style="left:2169.2px;top:1079.4px;" width="93" height="25.4" viewBox="0 0 93 25.4"><path d="M10 12.8H66" stroke="#e6e6e6" stroke-width="1.3"/><path d="M77.6 12.8L63.6 7.6V18Z" fill="#ededed"/></svg>
<div class="fld" style="left:1877.1px;top:1119.8px;width:116.6px;height:28.8px;"></div>
<div style="left:1976.3px;top:1120.8px;width:1.2px;height:26.8px;background:rgba(255,255,255,.07);"></div>
<svg class="a" style="left:1976.3px;top:1119.8px;" width="17.4" height="28.8" viewBox="0 0 17.4 28.8"><path d="M4.1 11.8L8.7 7.5L13.3 11.8M4.1 17L8.7 21.3L13.3 17" fill="none" stroke="#d6d6d6" stroke-width="1.7" stroke-linecap="round" stroke-linejoin="round"/></svg>
<span class="t" style="left:1883px;top:1127px;font-size:17.6px;line-height:17.6px;color:#e4e4e4;">100%</span>
<svg class="a" style="left:2016.6px;top:1120.4px;" width="28" height="28" viewBox="0 0 28 28"><g fill="none" stroke="#d6d6d6" stroke-width="1.3"><path d="M4.2 24.2C4.6 13.6 11.6 6 22.6 4.4"/><path d="M4.2 6.2V22M6.6 4.2H20.6" stroke-width="1"/><path d="M4.2 1.4L7 4.2L4.2 7L1.4 4.2Z" fill="#323130"/><path d="M23.2 1.6L26 4.4L23.2 7.2L20.4 4.4Z" fill="#323130"/><path d="M4.2 21.4L7 24.2L4.2 27L1.4 24.2Z" fill="#323130"/></g></svg>
<div class="fld" style="left:2051.6px;top:1119.8px;width:93.1px;height:28.8px;"></div>
<div style="left:2127.3px;top:1120.8px;width:1.2px;height:26.8px;background:rgba(255,255,255,.07);"></div>
<svg class="a" style="left:2127.3px;top:1119.8px;" width="17.4" height="28.8" viewBox="0 0 17.4 28.8"><path d="M4.1 11.8L8.7 7.5L13.3 11.8M4.1 17L8.7 21.3L13.3 17" fill="none" stroke="#d6d6d6" stroke-width="1.7" stroke-linecap="round" stroke-linejoin="round"/></svg>
<span class="t" style="left:2057.4px;top:1127px;font-size:17.6px;line-height:17.6px;color:#e4e4e4;letter-spacing:0.76px;">0 pt</span>
<div class="fld" style="left:2168.5px;top:1119.8px;width:116.9px;height:28.8px;"></div>
<div style="left:2268px;top:1120.8px;width:1.2px;height:26.8px;background:rgba(255,255,255,.07);"></div>
<svg class="a" style="left:2268px;top:1119.8px;" width="17.4" height="28.8" viewBox="0 0 17.4 28.8"><path d="M4.1 11.8L8.7 7.5L13.3 11.8M4.1 17L8.7 21.3L13.3 17" fill="none" stroke="#d6d6d6" stroke-width="1.7" stroke-linecap="round" stroke-linejoin="round"/></svg>
<span class="t" style="left:2174.6px;top:1127px;font-size:17.6px;line-height:17.6px;color:#e4e4e4;letter-spacing:0.26px;">50%</span>
<span class="t" style="left:1914.73px;top:1169px;font-size:17.6px;line-height:17.6px;color:#ececec;letter-spacing:0.53px;">Line Hops:</span>
<div class="dd" style="left:2018.7px;top:1164px;width:265.8px;height:25.5px;"></div>
<div style="left:2262.1px;top:1164px;width:22.4px;height:25.5px;background:linear-gradient(#4267bf,#3a5cb0);border-radius:0 6px 6px 0;"></div>
<svg class="a" style="left:2262.1px;top:1164px;" width="22.4" height="25.5" viewBox="0 0 22.4 25.5"><path d="M6.6 10.15L11.2 5.85L15.8 10.15M6.6 15.35L11.2 19.65L15.8 15.35" fill="none" stroke="#fff" stroke-width="1.8" stroke-linecap="round" stroke-linejoin="round"/></svg>
<span class="t" style="left:2030px;top:1169px;font-size:17.6px;line-height:17.6px;color:#ececec;letter-spacing:0.59px;">Do nothing</span>
<span class="t" style="left:1904.03px;top:1207px;font-size:17.6px;line-height:17.6px;color:#ececec;letter-spacing:0.43px;">Line Labels:</span>
<div class="dd" style="left:2018.7px;top:1202.4px;width:265.8px;height:25.6px;"></div>
<div style="left:2262.1px;top:1202.4px;width:22.4px;height:25.6px;background:linear-gradient(#4267bf,#3a5cb0);border-radius:0 6px 6px 0;"></div>
<svg class="a" style="left:2262.1px;top:1202.4px;" width="22.4" height="25.6" viewBox="0 0 22.4 25.6"><path d="M6.6 10.2L11.2 5.9L15.8 10.2M6.6 15.4L11.2 19.7L15.8 15.4" fill="none" stroke="#fff" stroke-width="1.8" stroke-linecap="round" stroke-linejoin="round"/></svg>
<span class="t" style="left:2030px;top:1207px;font-size:17.6px;line-height:17.6px;color:#ececec;letter-spacing:0.64px;">Do not clip the line&#x27;s stroke</span>
<div style="left:1860.5px;top:1245.9px;width:444.5px;height:1.3px;background:#3e3d3c;"></div>
<svg class="a" style="left:1863.8px;top:1264.4px;" width="14" height="12.4" viewBox="0 0 14 12.4"><path d="M0 0H14L7 12.4Z" fill="#9a9998"/></svg>
<span class="t" style="left:1883.2px;top:1263px;font-size:17.6px;line-height:17.6px;color:#f2f2f2;font-weight:700;letter-spacing:0.55px;">Image</span>
<svg class="a" style="left:2281px;top:1264.4px;" width="22" height="13" viewBox="0 0 22 13"><path d="M0 1H21M0 6.2H21M0 11.4H21" stroke="#9d9c9b" stroke-width="1.3"/></svg>
<div class="btn" style="left:1878px;top:1295.3px;width:223.8px;height:25.4px;border-radius:6px;"></div>
<span class="t" style="left:1941.19px;top:1300px;font-size:17.6px;line-height:17.6px;color:#ececec;letter-spacing:0.18px;">Set Image...</span>
<div style="left:2118.1px;top:1295.3px;width:89.7px;height:25.4px;background:#555453;border-radius:6px;box-shadow:0 1px 1px rgba(0,0,0,.3);"></div>
<span class="t" style="left:2130.29px;top:1300px;font-size:17.6px;line-height:17.6px;color:#868584;letter-spacing:-0.02px;">Remove</span>
<div class="dd" style="left:2224.1px;top:1295.3px;width:60.4px;height:25.4px;"></div>
<div style="left:2262.2px;top:1295.3px;width:22.3px;height:25.4px;background:linear-gradient(#4267bf,#3a5cb0);border-radius:0 6px 6px 0;"></div>
<svg class="a" style="left:2234.4px;top:1297.6px;" width="21" height="21" viewBox="0 0 21 21"><path d="M20.85 8.72L20.85 12.28L17.66 12.18L16.75 14.37L19.07 16.56L16.56 19.07L14.38 16.75L12.18 17.66L12.28 20.85L8.72 20.85L8.82 17.66L6.63 16.75L4.44 19.07L1.93 16.56L4.25 14.38L3.34 12.18L0.15 12.28L0.15 8.72L3.34 8.82L4.25 6.63L1.93 4.44L4.44 1.93L6.62 4.25L8.82 3.34L8.72 0.15L12.28 0.15L12.18 3.34L14.37 4.25L16.56 1.93L19.07 4.44L16.75 6.62L17.66 8.82Z" fill="#f0f0f0" stroke="#f0f0f0" stroke-width="1.2" stroke-linejoin="round"/><circle cx="10.5" cy="10.5" r="3.15" fill="#686766"/></svg>
<svg class="a" style="left:2262.2px;top:1295.3px;" width="22.3" height="25.4" viewBox="0 0 22.3 25.4"><path d="M6.2 10.4L11.2 15.2L16.2 10.4" fill="none" stroke="#fff" stroke-width="1.9" stroke-linecap="round" stroke-linejoin="round"/></svg>
<div style="left:1875.3px;top:1334.3px;width:412px;height:300px;background:#3b3a39;border-radius:7px;box-shadow:inset 0 0 0 1.3px rgba(255,255,255,.06);"></div>
<div style="left:1840px;top:1596.3px;width:481px;height:51px;background:#343537;"></div>
<div style="left:1840px;top:1595.6px;width:481px;height:1.5px;background:#555657;"></div>
<div style="left:1854px;top:1604.4px;width:38px;height:34.8px;background:linear-gradient(135deg,#6f6e6e,#797878);border-radius:6px;box-shadow:inset 0 0 0 1.3px rgba(255,255,255,.13);"></div>
<div style="left:1905.3px;top:1604.4px;width:212.4px;height:34.8px;background:linear-gradient(135deg,#6f6e6e,#7b7a7a);border-radius:6px;box-shadow:inset 0 0 0 1.3px rgba(255,255,255,.13);"></div>
<svg class="a" style="left:410.4px;top:1613.6px;" width="12" height="17" viewBox="0 0 12 17"><path d="M1 0V17M6 0V17M11 0V17" stroke="#a3a2a1" stroke-width="1.3"/></svg>
<span class="t" style="left:857.6px;top:1614px;font-size:17.6px;line-height:17.6px;color:#a5a5a6;letter-spacing:0.68px;">2 of 331 objects selected</span>
<svg class="a" style="left:1500.6px;top:1610.4px;" width="24" height="24" viewBox="0 0 24 24"><g fill="none" stroke="#a9a9aa" stroke-width="1.5"><circle cx="9" cy="9" r="7.4"/><path d="M5.4 9H12.6" stroke-width="1.3"/><path d="M14.6 14.8L21.4 21.6" stroke-width="3" stroke-linecap="round"/></g></svg>
<div style="left:1539.6px;top:1609.5px;width:77.2px;height:24.8px;background:#3b3b3d;box-shadow:inset 0 0 0 1px rgba(255,255,255,.09),inset 0 -1px 0 rgba(255,255,255,.10);"></div>
<span class="t" style="left:1545px;top:1615px;font-size:17.6px;line-height:17.6px;color:#e4e4e4;letter-spacing:-0.35px;">151%</span>
<div style="left:1616.6px;top:1609.5px;width:24px;height:24.8px;background:linear-gradient(#4267bf,#3a5cb0);border-radius:0 6px 6px 0;"></div>
<svg class="a" style="left:1616.6px;top:1609.5px;" width="24" height="24.8" viewBox="0 0 24 24.8"><path d="M7 10.2L12 15L17 10.2" fill="none" stroke="#fff" stroke-width="1.9" stroke-linecap="round" stroke-linejoin="round"/></svg>
<svg class="a" style="left:1655.6px;top:1610.4px;" width="24" height="24" viewBox="0 0 24 24"><g fill="none" stroke="#a9a9aa" stroke-width="1.5"><circle cx="9" cy="9" r="7.4"/><path d="M5.4 9H12.6M9 5.4V12.6" stroke-width="1.3"/><path d="M14.6 14.8L21.4 21.6" stroke-width="3" stroke-linecap="round"/></g></svg>
<div class="btn" style="left:1695.4px;top:1609.5px;width:129.2px;height:24.8px;border-radius:6px;"></div>
<span class="t" style="left:1704.45px;top:1615px;font-size:17.6px;line-height:17.6px;color:#ececec;letter-spacing:0.49px;">Fit in Window</span>
<div style="left:1840px;top:104px;width:1.6px;height:1543px;background:#131212;"></div>
<div style="left:390.1px;top:104px;width:2.1px;height:1543px;background:#100f0f;"></div>
</div>
<div id="edge"></div>
</body></html>
